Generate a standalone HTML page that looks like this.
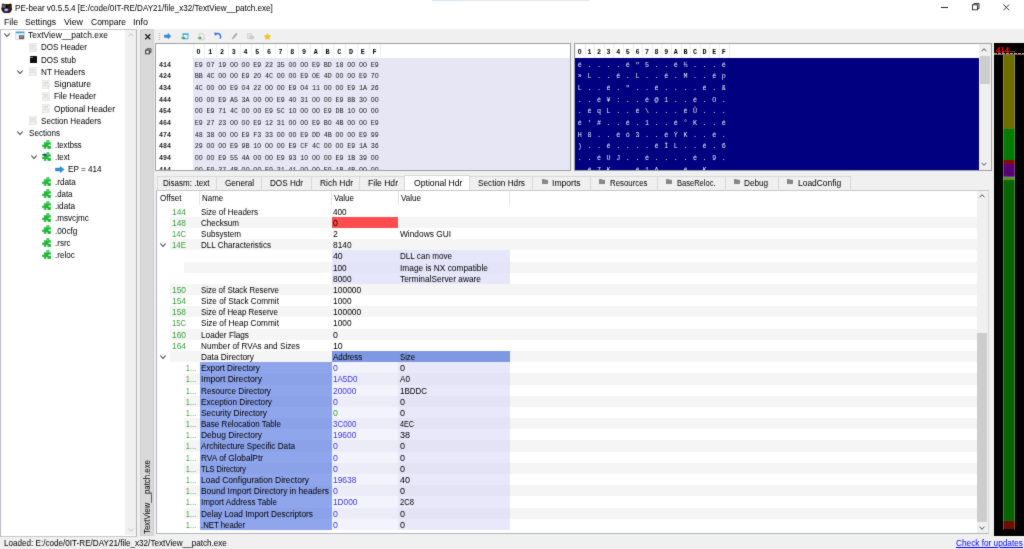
<!DOCTYPE html>
<html><head><meta charset="utf-8"><title>PE-bear</title>
<style>
html,body{margin:0;padding:0;}
body{width:1024px;height:549px;overflow:hidden;background:#f0f0f0;position:relative;font-family:"Liberation Sans",sans-serif;}
div,span.t,svg{position:absolute;}
span.t{white-space:nowrap;transform-origin:0 50%;}
.m{font-family:"Liberation Mono",monospace;}
.s{font-family:"Liberation Serif",serif;}
.b{font-weight:bold;}
.m i{font-family:"Liberation Sans",sans-serif;font-style:normal;font-size:7px;letter-spacing:0.13px;}
#w{left:-20px;top:-20px;width:1064px;height:589px;background:#f0f0f0;filter:url(#bf);}
#c{left:20px;top:20px;width:1024px;height:549px;}
</style></head><body>
<svg width="0" height="0" style="left:0;top:0"><filter id="bf" x="0" y="0" width="100%" height="100%" color-interpolation-filters="sRGB"><feConvolveMatrix order="3" kernelMatrix="0.015 0.08 0.015 0.08 0.62 0.08 0.015 0.08 0.015" divisor="1" edgeMode="duplicate" preserveAlpha="true"/></filter></svg>
<div id="w"><div id="c">
<div style="left:-20px;top:-20px;width:1064px;height:48.6px;background:#fff;"></div>
<div style="left:432px;top:0px;width:31px;height:1px;background:#cce4f7;"></div>
<div style="left:463px;top:0px;width:127px;height:1px;background:#e5e5e5;"></div>
<span class="t " style="left:15px;top:1px;font-size:9.6px;line-height:14px;color:#000;transform:scaleX(0.8419);">PE-bear v0.5.5.4 [E:/code/0IT-RE/DAY21/file_x32/TextView__patch.exe]</span>
<span class="t " style="left:4px;top:15px;font-size:9.6px;line-height:14px;color:#000;transform:scaleX(0.9051);">File</span>
<span class="t " style="left:25px;top:15px;font-size:9.6px;line-height:14px;color:#000;transform:scaleX(0.8937);">Settings</span>
<span class="t " style="left:64px;top:15px;font-size:9.6px;line-height:14px;color:#000;transform:scaleX(0.9208);">View</span>
<span class="t " style="left:91px;top:15px;font-size:9.6px;line-height:14px;color:#000;transform:scaleX(0.8865);">Compare</span>
<span class="t " style="left:133px;top:15px;font-size:9.6px;line-height:14px;color:#000;transform:scaleX(0.9369);">Info</span>
<span class="t " style="left:4px;top:536px;font-size:9.6px;line-height:14px;color:#000;transform:scaleX(0.8454);">Loaded: E:/code/0IT-RE/DAY21/file_x32/TextView__patch.exe</span>
<span class="t " style="left:956px;top:536px;font-size:9.6px;line-height:14px;color:#00f;transform:scaleX(0.8600);text-decoration:underline;">Check for updates</span>
<div style="left:0.4px;top:28.5px;width:136.6px;height:508px;background:#fff;border:1px solid #b2b6ba;border-top:1.5px solid #c4c8cc;border-bottom:1.4px solid #c4c8cc;box-sizing:border-box;"></div>
<div style="left:125px;top:30px;width:11px;height:504.5px;background:#f0f0f0;"></div>
<span class="t " style="left:28px;top:28px;font-size:9.6px;line-height:14px;color:#000;transform:scaleX(0.8836);">TextView__patch.exe</span>
<span class="t " style="left:41px;top:40px;font-size:9.6px;line-height:14px;color:#000;transform:scaleX(0.8371);">DOS Header</span>
<span class="t " style="left:41px;top:53px;font-size:9.6px;line-height:14px;color:#000;transform:scaleX(0.8411);">DOS stub</span>
<span class="t " style="left:41px;top:65px;font-size:9.6px;line-height:14px;color:#000;transform:scaleX(0.8532);">NT Headers</span>
<span class="t " style="left:54px;top:77px;font-size:9.6px;line-height:14px;color:#000;transform:scaleX(0.9004);">Signature</span>
<span class="t " style="left:54px;top:89px;font-size:9.6px;line-height:14px;color:#000;transform:scaleX(0.8465);">File Header</span>
<span class="t " style="left:54px;top:102px;font-size:9.6px;line-height:14px;color:#000;transform:scaleX(0.8726);">Optional Header</span>
<span class="t " style="left:41px;top:114px;font-size:9.6px;line-height:14px;color:#000;transform:scaleX(0.8454);">Section Headers</span>
<span class="t " style="left:29px;top:126px;font-size:9.6px;line-height:14px;color:#000;transform:scaleX(0.8420);">Sections</span>
<span class="t " style="left:54.5px;top:138px;font-size:9.6px;line-height:14px;color:#000;transform:scaleX(0.8072);">.textbss</span>
<span class="t " style="left:54.5px;top:150px;font-size:9.6px;line-height:14px;color:#000;transform:scaleX(0.8104);">.text</span>
<span class="t " style="left:68px;top:162px;font-size:9.6px;line-height:14px;color:#000;transform:scaleX(0.8462);">EP = 414</span>
<span class="t " style="left:54.5px;top:175px;font-size:9.6px;line-height:14px;color:#000;transform:scaleX(0.8474);">.rdata</span>
<span class="t " style="left:54.5px;top:187px;font-size:9.6px;line-height:14px;color:#000;transform:scaleX(0.8197);">.data</span>
<span class="t " style="left:54.5px;top:199px;font-size:9.6px;line-height:14px;color:#000;transform:scaleX(0.8517);">.idata</span>
<span class="t " style="left:54.5px;top:211px;font-size:9.6px;line-height:14px;color:#000;transform:scaleX(0.8451);">.msvcjmc</span>
<span class="t " style="left:54.5px;top:224px;font-size:9.6px;line-height:14px;color:#000;transform:scaleX(0.8566);">.00cfg</span>
<span class="t " style="left:54.5px;top:236px;font-size:9.6px;line-height:14px;color:#000;transform:scaleX(0.8360);">.rsrc</span>
<span class="t " style="left:54.5px;top:248px;font-size:9.6px;line-height:14px;color:#000;transform:scaleX(0.8435);">.reloc</span>
<div style="left:140px;top:29px;width:14px;height:506.6px;background:#d9d9d9;border:1px solid #cfcfcf;box-sizing:border-box;"></div>
<div style="left:155px;top:43px;width:416px;height:128px;background:#fff;border:1px solid #a0a0a0;box-sizing:border-box;"></div>
<div style="left:192.7px;top:58px;width:377.3px;height:112px;background:#e6e6f5;"></div>
<span class="t m b" style="left:196.5px;top:45px;font-size:6.7px;line-height:14px;color:#000;"><i>0</i></span>
<div style="left:192.7px;top:44px;width:1px;height:14px;background:#eeeeee;"></div>
<span class="t m b" style="left:208.23px;top:45px;font-size:6.7px;line-height:14px;color:#000;">1</span>
<div style="left:204.42999999999998px;top:44px;width:1px;height:14px;background:#eeeeee;"></div>
<span class="t m b" style="left:219.96px;top:45px;font-size:6.7px;line-height:14px;color:#000;">2</span>
<div style="left:216.16px;top:44px;width:1px;height:14px;background:#eeeeee;"></div>
<span class="t m b" style="left:231.69px;top:45px;font-size:6.7px;line-height:14px;color:#000;">3</span>
<div style="left:227.89px;top:44px;width:1px;height:14px;background:#eeeeee;"></div>
<span class="t m b" style="left:243.42000000000002px;top:45px;font-size:6.7px;line-height:14px;color:#000;">4</span>
<div style="left:239.62px;top:44px;width:1px;height:14px;background:#eeeeee;"></div>
<span class="t m b" style="left:255.15px;top:45px;font-size:6.7px;line-height:14px;color:#000;">5</span>
<div style="left:251.35px;top:44px;width:1px;height:14px;background:#eeeeee;"></div>
<span class="t m b" style="left:266.88px;top:45px;font-size:6.7px;line-height:14px;color:#000;">6</span>
<div style="left:263.08px;top:44px;width:1px;height:14px;background:#eeeeee;"></div>
<span class="t m b" style="left:278.61px;top:45px;font-size:6.7px;line-height:14px;color:#000;">7</span>
<div style="left:274.81px;top:44px;width:1px;height:14px;background:#eeeeee;"></div>
<span class="t m b" style="left:290.34px;top:45px;font-size:6.7px;line-height:14px;color:#000;">8</span>
<div style="left:286.53999999999996px;top:44px;width:1px;height:14px;background:#eeeeee;"></div>
<span class="t m b" style="left:302.07px;top:45px;font-size:6.7px;line-height:14px;color:#000;">9</span>
<div style="left:298.27px;top:44px;width:1px;height:14px;background:#eeeeee;"></div>
<span class="t m b" style="left:313.8px;top:45px;font-size:6.7px;line-height:14px;color:#000;">A</span>
<div style="left:310.0px;top:44px;width:1px;height:14px;background:#eeeeee;"></div>
<span class="t m b" style="left:325.53000000000003px;top:45px;font-size:6.7px;line-height:14px;color:#000;">B</span>
<div style="left:321.73px;top:44px;width:1px;height:14px;background:#eeeeee;"></div>
<span class="t m b" style="left:337.26px;top:45px;font-size:6.7px;line-height:14px;color:#000;">C</span>
<div style="left:333.46px;top:44px;width:1px;height:14px;background:#eeeeee;"></div>
<span class="t m b" style="left:348.99px;top:45px;font-size:6.7px;line-height:14px;color:#000;">D</span>
<div style="left:345.19px;top:44px;width:1px;height:14px;background:#eeeeee;"></div>
<span class="t m b" style="left:360.71999999999997px;top:45px;font-size:6.7px;line-height:14px;color:#000;">E</span>
<div style="left:356.91999999999996px;top:44px;width:1px;height:14px;background:#eeeeee;"></div>
<span class="t m b" style="left:372.45px;top:45px;font-size:6.7px;line-height:14px;color:#000;">F</span>
<div style="left:368.65px;top:44px;width:1px;height:14px;background:#eeeeee;"></div>
<div style="left:380.38px;top:44px;width:1px;height:14px;background:#eeeeee;"></div>
<div style="left:156px;top:58px;width:414px;height:112px;overflow:hidden;">
<span class="t m b" style="left:3px;top:0px;font-size:6.7px;line-height:14px;color:#1c1c1c;">414</span>
<span class="t m" style="left:38.69999999999999px;top:0px;font-size:6.7px;line-height:14px;color:#151515;">E9</span>
<span class="t m" style="left:50.42999999999998px;top:0px;font-size:6.7px;line-height:14px;color:#151515;"><i>0</i>7</span>
<span class="t m" style="left:62.16px;top:0px;font-size:6.7px;line-height:14px;color:#151515;">19</span>
<span class="t m" style="left:73.88999999999999px;top:0px;font-size:6.7px;line-height:14px;color:#151515;"><i>0</i><i>0</i></span>
<span class="t m" style="left:85.62px;top:0px;font-size:6.7px;line-height:14px;color:#151515;"><i>0</i><i>0</i></span>
<span class="t m" style="left:97.35px;top:0px;font-size:6.7px;line-height:14px;color:#151515;">E9</span>
<span class="t m" style="left:109.07999999999998px;top:0px;font-size:6.7px;line-height:14px;color:#151515;">22</span>
<span class="t m" style="left:120.81px;top:0px;font-size:6.7px;line-height:14px;color:#151515;">35</span>
<span class="t m" style="left:132.53999999999996px;top:0px;font-size:6.7px;line-height:14px;color:#151515;"><i>0</i><i>0</i></span>
<span class="t m" style="left:144.26999999999998px;top:0px;font-size:6.7px;line-height:14px;color:#151515;"><i>0</i><i>0</i></span>
<span class="t m" style="left:156.0px;top:0px;font-size:6.7px;line-height:14px;color:#151515;">E9</span>
<span class="t m" style="left:167.73000000000002px;top:0px;font-size:6.7px;line-height:14px;color:#151515;">BD</span>
<span class="t m" style="left:179.45999999999998px;top:0px;font-size:6.7px;line-height:14px;color:#151515;">18</span>
<span class="t m" style="left:191.19px;top:0px;font-size:6.7px;line-height:14px;color:#151515;"><i>0</i><i>0</i></span>
<span class="t m" style="left:202.91999999999996px;top:0px;font-size:6.7px;line-height:14px;color:#151515;"><i>0</i><i>0</i></span>
<span class="t m" style="left:214.64999999999998px;top:0px;font-size:6.7px;line-height:14px;color:#151515;">E9</span>
<span class="t m b" style="left:3px;top:11px;font-size:6.7px;line-height:14px;color:#1c1c1c;">424</span>
<span class="t m" style="left:38.69999999999999px;top:11px;font-size:6.7px;line-height:14px;color:#151515;">BB</span>
<span class="t m" style="left:50.42999999999998px;top:11px;font-size:6.7px;line-height:14px;color:#151515;">4C</span>
<span class="t m" style="left:62.16px;top:11px;font-size:6.7px;line-height:14px;color:#151515;"><i>0</i><i>0</i></span>
<span class="t m" style="left:73.88999999999999px;top:11px;font-size:6.7px;line-height:14px;color:#151515;"><i>0</i><i>0</i></span>
<span class="t m" style="left:85.62px;top:11px;font-size:6.7px;line-height:14px;color:#151515;">E9</span>
<span class="t m" style="left:97.35px;top:11px;font-size:6.7px;line-height:14px;color:#151515;">2<i>0</i></span>
<span class="t m" style="left:109.07999999999998px;top:11px;font-size:6.7px;line-height:14px;color:#151515;">4C</span>
<span class="t m" style="left:120.81px;top:11px;font-size:6.7px;line-height:14px;color:#151515;"><i>0</i><i>0</i></span>
<span class="t m" style="left:132.53999999999996px;top:11px;font-size:6.7px;line-height:14px;color:#151515;"><i>0</i><i>0</i></span>
<span class="t m" style="left:144.26999999999998px;top:11px;font-size:6.7px;line-height:14px;color:#151515;">E9</span>
<span class="t m" style="left:156.0px;top:11px;font-size:6.7px;line-height:14px;color:#151515;"><i>0</i>E</span>
<span class="t m" style="left:167.73000000000002px;top:11px;font-size:6.7px;line-height:14px;color:#151515;">4D</span>
<span class="t m" style="left:179.45999999999998px;top:11px;font-size:6.7px;line-height:14px;color:#151515;"><i>0</i><i>0</i></span>
<span class="t m" style="left:191.19px;top:11px;font-size:6.7px;line-height:14px;color:#151515;"><i>0</i><i>0</i></span>
<span class="t m" style="left:202.91999999999996px;top:11px;font-size:6.7px;line-height:14px;color:#151515;">E9</span>
<span class="t m" style="left:214.64999999999998px;top:11px;font-size:6.7px;line-height:14px;color:#151515;">7<i>0</i></span>
<span class="t m b" style="left:3px;top:23px;font-size:6.7px;line-height:14px;color:#1c1c1c;">434</span>
<span class="t m" style="left:38.69999999999999px;top:23px;font-size:6.7px;line-height:14px;color:#151515;">4C</span>
<span class="t m" style="left:50.42999999999998px;top:23px;font-size:6.7px;line-height:14px;color:#151515;"><i>0</i><i>0</i></span>
<span class="t m" style="left:62.16px;top:23px;font-size:6.7px;line-height:14px;color:#151515;"><i>0</i><i>0</i></span>
<span class="t m" style="left:73.88999999999999px;top:23px;font-size:6.7px;line-height:14px;color:#151515;">E9</span>
<span class="t m" style="left:85.62px;top:23px;font-size:6.7px;line-height:14px;color:#151515;"><i>0</i>4</span>
<span class="t m" style="left:97.35px;top:23px;font-size:6.7px;line-height:14px;color:#151515;">22</span>
<span class="t m" style="left:109.07999999999998px;top:23px;font-size:6.7px;line-height:14px;color:#151515;"><i>0</i><i>0</i></span>
<span class="t m" style="left:120.81px;top:23px;font-size:6.7px;line-height:14px;color:#151515;"><i>0</i><i>0</i></span>
<span class="t m" style="left:132.53999999999996px;top:23px;font-size:6.7px;line-height:14px;color:#151515;">E9</span>
<span class="t m" style="left:144.26999999999998px;top:23px;font-size:6.7px;line-height:14px;color:#151515;"><i>0</i>4</span>
<span class="t m" style="left:156.0px;top:23px;font-size:6.7px;line-height:14px;color:#151515;">11</span>
<span class="t m" style="left:167.73000000000002px;top:23px;font-size:6.7px;line-height:14px;color:#151515;"><i>0</i><i>0</i></span>
<span class="t m" style="left:179.45999999999998px;top:23px;font-size:6.7px;line-height:14px;color:#151515;"><i>0</i><i>0</i></span>
<span class="t m" style="left:191.19px;top:23px;font-size:6.7px;line-height:14px;color:#151515;">E9</span>
<span class="t m" style="left:202.91999999999996px;top:23px;font-size:6.7px;line-height:14px;color:#151515;">1A</span>
<span class="t m" style="left:214.64999999999998px;top:23px;font-size:6.7px;line-height:14px;color:#151515;">26</span>
<span class="t m b" style="left:3px;top:35px;font-size:6.7px;line-height:14px;color:#1c1c1c;">444</span>
<span class="t m" style="left:38.69999999999999px;top:35px;font-size:6.7px;line-height:14px;color:#151515;"><i>0</i><i>0</i></span>
<span class="t m" style="left:50.42999999999998px;top:35px;font-size:6.7px;line-height:14px;color:#151515;"><i>0</i><i>0</i></span>
<span class="t m" style="left:62.16px;top:35px;font-size:6.7px;line-height:14px;color:#151515;">E9</span>
<span class="t m" style="left:73.88999999999999px;top:35px;font-size:6.7px;line-height:14px;color:#151515;">A5</span>
<span class="t m" style="left:85.62px;top:35px;font-size:6.7px;line-height:14px;color:#151515;">3A</span>
<span class="t m" style="left:97.35px;top:35px;font-size:6.7px;line-height:14px;color:#151515;"><i>0</i><i>0</i></span>
<span class="t m" style="left:109.07999999999998px;top:35px;font-size:6.7px;line-height:14px;color:#151515;"><i>0</i><i>0</i></span>
<span class="t m" style="left:120.81px;top:35px;font-size:6.7px;line-height:14px;color:#151515;">E9</span>
<span class="t m" style="left:132.53999999999996px;top:35px;font-size:6.7px;line-height:14px;color:#151515;">4<i>0</i></span>
<span class="t m" style="left:144.26999999999998px;top:35px;font-size:6.7px;line-height:14px;color:#151515;">31</span>
<span class="t m" style="left:156.0px;top:35px;font-size:6.7px;line-height:14px;color:#151515;"><i>0</i><i>0</i></span>
<span class="t m" style="left:167.73000000000002px;top:35px;font-size:6.7px;line-height:14px;color:#151515;"><i>0</i><i>0</i></span>
<span class="t m" style="left:179.45999999999998px;top:35px;font-size:6.7px;line-height:14px;color:#151515;">E9</span>
<span class="t m" style="left:191.19px;top:35px;font-size:6.7px;line-height:14px;color:#151515;">8B</span>
<span class="t m" style="left:202.91999999999996px;top:35px;font-size:6.7px;line-height:14px;color:#151515;">3<i>0</i></span>
<span class="t m" style="left:214.64999999999998px;top:35px;font-size:6.7px;line-height:14px;color:#151515;"><i>0</i><i>0</i></span>
<span class="t m b" style="left:3px;top:46px;font-size:6.7px;line-height:14px;color:#1c1c1c;">454</span>
<span class="t m" style="left:38.69999999999999px;top:46px;font-size:6.7px;line-height:14px;color:#151515;"><i>0</i><i>0</i></span>
<span class="t m" style="left:50.42999999999998px;top:46px;font-size:6.7px;line-height:14px;color:#151515;">E9</span>
<span class="t m" style="left:62.16px;top:46px;font-size:6.7px;line-height:14px;color:#151515;">71</span>
<span class="t m" style="left:73.88999999999999px;top:46px;font-size:6.7px;line-height:14px;color:#151515;">4C</span>
<span class="t m" style="left:85.62px;top:46px;font-size:6.7px;line-height:14px;color:#151515;"><i>0</i><i>0</i></span>
<span class="t m" style="left:97.35px;top:46px;font-size:6.7px;line-height:14px;color:#151515;"><i>0</i><i>0</i></span>
<span class="t m" style="left:109.07999999999998px;top:46px;font-size:6.7px;line-height:14px;color:#151515;">E9</span>
<span class="t m" style="left:120.81px;top:46px;font-size:6.7px;line-height:14px;color:#151515;">5C</span>
<span class="t m" style="left:132.53999999999996px;top:46px;font-size:6.7px;line-height:14px;color:#151515;">1<i>0</i></span>
<span class="t m" style="left:144.26999999999998px;top:46px;font-size:6.7px;line-height:14px;color:#151515;"><i>0</i><i>0</i></span>
<span class="t m" style="left:156.0px;top:46px;font-size:6.7px;line-height:14px;color:#151515;"><i>0</i><i>0</i></span>
<span class="t m" style="left:167.73000000000002px;top:46px;font-size:6.7px;line-height:14px;color:#151515;">E9</span>
<span class="t m" style="left:179.45999999999998px;top:46px;font-size:6.7px;line-height:14px;color:#151515;">DB</span>
<span class="t m" style="left:191.19px;top:46px;font-size:6.7px;line-height:14px;color:#151515;">1<i>0</i></span>
<span class="t m" style="left:202.91999999999996px;top:46px;font-size:6.7px;line-height:14px;color:#151515;"><i>0</i><i>0</i></span>
<span class="t m" style="left:214.64999999999998px;top:46px;font-size:6.7px;line-height:14px;color:#151515;"><i>0</i><i>0</i></span>
<span class="t m b" style="left:3px;top:58px;font-size:6.7px;line-height:14px;color:#1c1c1c;">464</span>
<span class="t m" style="left:38.69999999999999px;top:58px;font-size:6.7px;line-height:14px;color:#151515;">E9</span>
<span class="t m" style="left:50.42999999999998px;top:58px;font-size:6.7px;line-height:14px;color:#151515;">27</span>
<span class="t m" style="left:62.16px;top:58px;font-size:6.7px;line-height:14px;color:#151515;">23</span>
<span class="t m" style="left:73.88999999999999px;top:58px;font-size:6.7px;line-height:14px;color:#151515;"><i>0</i><i>0</i></span>
<span class="t m" style="left:85.62px;top:58px;font-size:6.7px;line-height:14px;color:#151515;"><i>0</i><i>0</i></span>
<span class="t m" style="left:97.35px;top:58px;font-size:6.7px;line-height:14px;color:#151515;">E9</span>
<span class="t m" style="left:109.07999999999998px;top:58px;font-size:6.7px;line-height:14px;color:#151515;">12</span>
<span class="t m" style="left:120.81px;top:58px;font-size:6.7px;line-height:14px;color:#151515;">31</span>
<span class="t m" style="left:132.53999999999996px;top:58px;font-size:6.7px;line-height:14px;color:#151515;"><i>0</i><i>0</i></span>
<span class="t m" style="left:144.26999999999998px;top:58px;font-size:6.7px;line-height:14px;color:#151515;"><i>0</i><i>0</i></span>
<span class="t m" style="left:156.0px;top:58px;font-size:6.7px;line-height:14px;color:#151515;">E9</span>
<span class="t m" style="left:167.73000000000002px;top:58px;font-size:6.7px;line-height:14px;color:#151515;">B<i>0</i></span>
<span class="t m" style="left:179.45999999999998px;top:58px;font-size:6.7px;line-height:14px;color:#151515;">4B</span>
<span class="t m" style="left:191.19px;top:58px;font-size:6.7px;line-height:14px;color:#151515;"><i>0</i><i>0</i></span>
<span class="t m" style="left:202.91999999999996px;top:58px;font-size:6.7px;line-height:14px;color:#151515;"><i>0</i><i>0</i></span>
<span class="t m" style="left:214.64999999999998px;top:58px;font-size:6.7px;line-height:14px;color:#151515;">E9</span>
<span class="t m b" style="left:3px;top:70px;font-size:6.7px;line-height:14px;color:#1c1c1c;">474</span>
<span class="t m" style="left:38.69999999999999px;top:70px;font-size:6.7px;line-height:14px;color:#151515;">48</span>
<span class="t m" style="left:50.42999999999998px;top:70px;font-size:6.7px;line-height:14px;color:#151515;">38</span>
<span class="t m" style="left:62.16px;top:70px;font-size:6.7px;line-height:14px;color:#151515;"><i>0</i><i>0</i></span>
<span class="t m" style="left:73.88999999999999px;top:70px;font-size:6.7px;line-height:14px;color:#151515;"><i>0</i><i>0</i></span>
<span class="t m" style="left:85.62px;top:70px;font-size:6.7px;line-height:14px;color:#151515;">E9</span>
<span class="t m" style="left:97.35px;top:70px;font-size:6.7px;line-height:14px;color:#151515;">F3</span>
<span class="t m" style="left:109.07999999999998px;top:70px;font-size:6.7px;line-height:14px;color:#151515;">33</span>
<span class="t m" style="left:120.81px;top:70px;font-size:6.7px;line-height:14px;color:#151515;"><i>0</i><i>0</i></span>
<span class="t m" style="left:132.53999999999996px;top:70px;font-size:6.7px;line-height:14px;color:#151515;"><i>0</i><i>0</i></span>
<span class="t m" style="left:144.26999999999998px;top:70px;font-size:6.7px;line-height:14px;color:#151515;">E9</span>
<span class="t m" style="left:156.0px;top:70px;font-size:6.7px;line-height:14px;color:#151515;">DD</span>
<span class="t m" style="left:167.73000000000002px;top:70px;font-size:6.7px;line-height:14px;color:#151515;">4B</span>
<span class="t m" style="left:179.45999999999998px;top:70px;font-size:6.7px;line-height:14px;color:#151515;"><i>0</i><i>0</i></span>
<span class="t m" style="left:191.19px;top:70px;font-size:6.7px;line-height:14px;color:#151515;"><i>0</i><i>0</i></span>
<span class="t m" style="left:202.91999999999996px;top:70px;font-size:6.7px;line-height:14px;color:#151515;">E9</span>
<span class="t m" style="left:214.64999999999998px;top:70px;font-size:6.7px;line-height:14px;color:#151515;">99</span>
<span class="t m b" style="left:3px;top:81px;font-size:6.7px;line-height:14px;color:#1c1c1c;">484</span>
<span class="t m" style="left:38.69999999999999px;top:81px;font-size:6.7px;line-height:14px;color:#151515;">29</span>
<span class="t m" style="left:50.42999999999998px;top:81px;font-size:6.7px;line-height:14px;color:#151515;"><i>0</i><i>0</i></span>
<span class="t m" style="left:62.16px;top:81px;font-size:6.7px;line-height:14px;color:#151515;"><i>0</i><i>0</i></span>
<span class="t m" style="left:73.88999999999999px;top:81px;font-size:6.7px;line-height:14px;color:#151515;">E9</span>
<span class="t m" style="left:85.62px;top:81px;font-size:6.7px;line-height:14px;color:#151515;">9B</span>
<span class="t m" style="left:97.35px;top:81px;font-size:6.7px;line-height:14px;color:#151515;">1<i>0</i></span>
<span class="t m" style="left:109.07999999999998px;top:81px;font-size:6.7px;line-height:14px;color:#151515;"><i>0</i><i>0</i></span>
<span class="t m" style="left:120.81px;top:81px;font-size:6.7px;line-height:14px;color:#151515;"><i>0</i><i>0</i></span>
<span class="t m" style="left:132.53999999999996px;top:81px;font-size:6.7px;line-height:14px;color:#151515;">E9</span>
<span class="t m" style="left:144.26999999999998px;top:81px;font-size:6.7px;line-height:14px;color:#151515;">CF</span>
<span class="t m" style="left:156.0px;top:81px;font-size:6.7px;line-height:14px;color:#151515;">4C</span>
<span class="t m" style="left:167.73000000000002px;top:81px;font-size:6.7px;line-height:14px;color:#151515;"><i>0</i><i>0</i></span>
<span class="t m" style="left:179.45999999999998px;top:81px;font-size:6.7px;line-height:14px;color:#151515;"><i>0</i><i>0</i></span>
<span class="t m" style="left:191.19px;top:81px;font-size:6.7px;line-height:14px;color:#151515;">E9</span>
<span class="t m" style="left:202.91999999999996px;top:81px;font-size:6.7px;line-height:14px;color:#151515;">1A</span>
<span class="t m" style="left:214.64999999999998px;top:81px;font-size:6.7px;line-height:14px;color:#151515;">36</span>
<span class="t m b" style="left:3px;top:93px;font-size:6.7px;line-height:14px;color:#1c1c1c;">494</span>
<span class="t m" style="left:38.69999999999999px;top:93px;font-size:6.7px;line-height:14px;color:#151515;"><i>0</i><i>0</i></span>
<span class="t m" style="left:50.42999999999998px;top:93px;font-size:6.7px;line-height:14px;color:#151515;"><i>0</i><i>0</i></span>
<span class="t m" style="left:62.16px;top:93px;font-size:6.7px;line-height:14px;color:#151515;">E9</span>
<span class="t m" style="left:73.88999999999999px;top:93px;font-size:6.7px;line-height:14px;color:#151515;">55</span>
<span class="t m" style="left:85.62px;top:93px;font-size:6.7px;line-height:14px;color:#151515;">4A</span>
<span class="t m" style="left:97.35px;top:93px;font-size:6.7px;line-height:14px;color:#151515;"><i>0</i><i>0</i></span>
<span class="t m" style="left:109.07999999999998px;top:93px;font-size:6.7px;line-height:14px;color:#151515;"><i>0</i><i>0</i></span>
<span class="t m" style="left:120.81px;top:93px;font-size:6.7px;line-height:14px;color:#151515;">E9</span>
<span class="t m" style="left:132.53999999999996px;top:93px;font-size:6.7px;line-height:14px;color:#151515;">93</span>
<span class="t m" style="left:144.26999999999998px;top:93px;font-size:6.7px;line-height:14px;color:#151515;">1<i>0</i></span>
<span class="t m" style="left:156.0px;top:93px;font-size:6.7px;line-height:14px;color:#151515;"><i>0</i><i>0</i></span>
<span class="t m" style="left:167.73000000000002px;top:93px;font-size:6.7px;line-height:14px;color:#151515;"><i>0</i><i>0</i></span>
<span class="t m" style="left:179.45999999999998px;top:93px;font-size:6.7px;line-height:14px;color:#151515;">E9</span>
<span class="t m" style="left:191.19px;top:93px;font-size:6.7px;line-height:14px;color:#151515;">1B</span>
<span class="t m" style="left:202.91999999999996px;top:93px;font-size:6.7px;line-height:14px;color:#151515;">39</span>
<span class="t m" style="left:214.64999999999998px;top:93px;font-size:6.7px;line-height:14px;color:#151515;"><i>0</i><i>0</i></span>
<span class="t m b" style="left:3px;top:105px;font-size:6.7px;line-height:14px;color:#1c1c1c;">4A4</span>
<span class="t m" style="left:38.69999999999999px;top:105px;font-size:6.7px;line-height:14px;color:#151515;"><i>0</i><i>0</i></span>
<span class="t m" style="left:50.42999999999998px;top:105px;font-size:6.7px;line-height:14px;color:#151515;">E9</span>
<span class="t m" style="left:62.16px;top:105px;font-size:6.7px;line-height:14px;color:#151515;">37</span>
<span class="t m" style="left:73.88999999999999px;top:105px;font-size:6.7px;line-height:14px;color:#151515;">4B</span>
<span class="t m" style="left:85.62px;top:105px;font-size:6.7px;line-height:14px;color:#151515;"><i>0</i><i>0</i></span>
<span class="t m" style="left:97.35px;top:105px;font-size:6.7px;line-height:14px;color:#151515;"><i>0</i><i>0</i></span>
<span class="t m" style="left:109.07999999999998px;top:105px;font-size:6.7px;line-height:14px;color:#151515;">E9</span>
<span class="t m" style="left:120.81px;top:105px;font-size:6.7px;line-height:14px;color:#151515;">31</span>
<span class="t m" style="left:132.53999999999996px;top:105px;font-size:6.7px;line-height:14px;color:#151515;">41</span>
<span class="t m" style="left:144.26999999999998px;top:105px;font-size:6.7px;line-height:14px;color:#151515;"><i>0</i><i>0</i></span>
<span class="t m" style="left:156.0px;top:105px;font-size:6.7px;line-height:14px;color:#151515;"><i>0</i><i>0</i></span>
<span class="t m" style="left:167.73000000000002px;top:105px;font-size:6.7px;line-height:14px;color:#151515;">E9</span>
<span class="t m" style="left:179.45999999999998px;top:105px;font-size:6.7px;line-height:14px;color:#151515;">1B</span>
<span class="t m" style="left:191.19px;top:105px;font-size:6.7px;line-height:14px;color:#151515;">4B</span>
<span class="t m" style="left:202.91999999999996px;top:105px;font-size:6.7px;line-height:14px;color:#151515;"><i>0</i><i>0</i></span>
<span class="t m" style="left:214.64999999999998px;top:105px;font-size:6.7px;line-height:14px;color:#151515;"><i>0</i><i>0</i></span>
</div>
<div style="left:574px;top:43px;width:418px;height:128px;background:#fff;border:1px solid #a0a0a0;box-sizing:border-box;"></div>
<div style="left:575px;top:58px;width:404px;height:112px;background:#000080;"></div>
<div style="left:979px;top:44px;width:12px;height:126px;background:#f0f0f0;"></div>
<div style="left:979.5px;top:56px;width:10px;height:27.7px;background:#cdcdcd;"></div>
<div style="left:994px;top:43.3px;width:50px;height:492.5px;background:#000;"></div>
<div style="left:1003.3px;top:53.7px;width:11.4px;height:75.5px;background:#6e6e00;"></div>
<div style="left:1003.3px;top:129.2px;width:11.4px;height:31.1px;background:#007c00;"></div>
<div style="left:1003.3px;top:160.3px;width:11.4px;height:3.4px;background:#8a0a00;"></div>
<div style="left:1003.3px;top:163.7px;width:11.4px;height:12.5px;background:#5a0078;"></div>
<div style="left:1003.3px;top:176.2px;width:11.4px;height:1px;background:#3048d8;"></div>
<div style="left:1003.3px;top:177.3px;width:11.4px;height:2px;background:#8c8600;"></div>
<div style="left:1003.3px;top:179.3px;width:11.4px;height:0.8px;background:#30a030;"></div>
<div style="left:1003.3px;top:180px;width:11.4px;height:341.3px;background:#086600;"></div>
<div style="left:1003.3px;top:521.3px;width:11.4px;height:8.2px;background:#6e0c00;"></div>
<div style="left:1003.3px;top:50.5px;width:0.6px;height:479px;background:rgba(200,200,160,0.35);"></div>
<div style="left:1014.0999999999999px;top:50.5px;width:0.6px;height:479px;background:rgba(200,200,160,0.35);"></div>
<div style="left:1003.3px;top:50.5px;width:11.4px;height:0.6px;background:rgba(200,200,160,0.35);"></div>
<div style="left:155.5px;top:189.6px;width:833.5px;height:344.2px;background:#fff;border:1px solid #b2b6ba;border-top:1.4px solid #c6cace;border-right:1px solid #d6d8da;box-sizing:border-box;"></div>
<div style="left:199px;top:191px;width:1px;height:14px;background:#e5e5e5;"></div>
<div style="left:331px;top:191px;width:1px;height:14px;background:#e5e5e5;"></div>
<div style="left:398px;top:191px;width:1px;height:14px;background:#e5e5e5;"></div>
<div style="left:509px;top:191px;width:1px;height:14px;background:#e5e5e5;"></div>
<span class="t " style="left:159.7px;top:191px;font-size:9.6px;line-height:14px;color:#000;transform:scaleX(0.8493);">Offset</span>
<span class="t " style="left:202.3px;top:191px;font-size:9.6px;line-height:14px;color:#000;transform:scaleX(0.8279);">Name</span>
<span class="t " style="left:334px;top:191px;font-size:9.6px;line-height:14px;color:#000;transform:scaleX(0.8389);">Value</span>
<span class="t " style="left:401px;top:191px;font-size:9.6px;line-height:14px;color:#000;transform:scaleX(0.8389);">Value</span>
<span class="t " style="left:172px;top:205px;font-size:9.6px;line-height:14px;color:#38a038;transform:scaleX(0.8742);">144</span>
<span class="t " style="left:201px;top:205px;font-size:9.6px;line-height:14px;color:#000;transform:scaleX(0.8346);">Size of Headers</span>
<span class="t " style="left:333.3px;top:205px;font-size:9.6px;line-height:14px;color:#000;transform:scaleX(0.8523);">400</span>
<div style="left:170px;top:216.88px;width:806.5px;height:11.18px;background:#f5f5f5;"></div>
<div style="left:331.5px;top:216.88px;width:66.5px;height:11.18px;background:#ff4d4d;"></div>
<span class="t " style="left:172px;top:216px;font-size:9.6px;line-height:14px;color:#38a038;transform:scaleX(0.8742);">148</span>
<span class="t " style="left:201px;top:216px;font-size:9.6px;line-height:14px;color:#000;transform:scaleX(0.8380);">Checksum</span>
<span class="t " style="left:333.3px;top:216px;font-size:9.6px;line-height:14px;color:#000;transform:scaleX(0.9132);">0</span>
<span class="t " style="left:172px;top:227px;font-size:9.6px;line-height:14px;color:#38a038;transform:scaleX(0.7950);">14C</span>
<span class="t " style="left:201px;top:227px;font-size:9.6px;line-height:14px;color:#000;transform:scaleX(0.8424);">Subsystem</span>
<span class="t " style="left:333.3px;top:227px;font-size:9.6px;line-height:14px;color:#000;transform:scaleX(0.9132);">2</span>
<span class="t " style="left:400px;top:227px;font-size:9.6px;line-height:14px;color:#000;transform:scaleX(0.8692);">Windows GUI</span>
<div style="left:170px;top:239.24px;width:806.5px;height:11.18px;background:#f5f5f5;"></div>
<span class="t " style="left:172px;top:238px;font-size:9.6px;line-height:14px;color:#38a038;transform:scaleX(0.8196);">14E</span>
<span class="t " style="left:201px;top:238px;font-size:9.6px;line-height:14px;color:#000;transform:scaleX(0.8393);">DLL Characteristics</span>
<span class="t " style="left:333.3px;top:238px;font-size:9.6px;line-height:14px;color:#000;transform:scaleX(0.8675);">8140</span>
<div style="left:331.5px;top:250.42px;width:178px;height:11.18px;background:#e6e6fa;"></div>
<span class="t " style="left:333.3px;top:249px;font-size:9.6px;line-height:14px;color:#000;transform:scaleX(0.9132);">40</span>
<span class="t " style="left:400px;top:249px;font-size:9.6px;line-height:14px;color:#000;transform:scaleX(0.8450);">DLL can move</span>
<div style="left:183.5px;top:261.6px;width:793.0px;height:11.18px;background:#f5f5f5;"></div>
<div style="left:331.5px;top:261.6px;width:178px;height:11.18px;background:#e4e4f8;"></div>
<span class="t " style="left:333.3px;top:261px;font-size:9.6px;line-height:14px;color:#000;transform:scaleX(0.8523);">100</span>
<span class="t " style="left:400px;top:261px;font-size:9.6px;line-height:14px;color:#000;transform:scaleX(0.8681);">Image is NX compatible</span>
<div style="left:331.5px;top:272.78px;width:178px;height:11.18px;background:#e6e6fa;"></div>
<span class="t " style="left:333.3px;top:272px;font-size:9.6px;line-height:14px;color:#000;transform:scaleX(0.8675);">8000</span>
<span class="t " style="left:400px;top:272px;font-size:9.6px;line-height:14px;color:#000;transform:scaleX(0.8676);">TerminalServer aware</span>
<div style="left:170px;top:283.96px;width:806.5px;height:11.18px;background:#f5f5f5;"></div>
<span class="t " style="left:172px;top:283px;font-size:9.6px;line-height:14px;color:#38a038;transform:scaleX(0.8742);">150</span>
<span class="t " style="left:201px;top:283px;font-size:9.6px;line-height:14px;color:#000;transform:scaleX(0.8260);">Size of Stack Reserve</span>
<span class="t " style="left:333.3px;top:283px;font-size:9.6px;line-height:14px;color:#000;transform:scaleX(0.8827);">100000</span>
<span class="t " style="left:172px;top:294px;font-size:9.6px;line-height:14px;color:#38a038;transform:scaleX(0.8742);">154</span>
<span class="t " style="left:201px;top:294px;font-size:9.6px;line-height:14px;color:#000;transform:scaleX(0.8501);">Size of Stack Commit</span>
<span class="t " style="left:333.3px;top:294px;font-size:9.6px;line-height:14px;color:#000;transform:scaleX(0.8675);">1000</span>
<div style="left:170px;top:306.32px;width:806.5px;height:11.18px;background:#f5f5f5;"></div>
<span class="t " style="left:172px;top:305px;font-size:9.6px;line-height:14px;color:#38a038;transform:scaleX(0.8742);">158</span>
<span class="t " style="left:201px;top:305px;font-size:9.6px;line-height:14px;color:#000;transform:scaleX(0.8246);">Size of Heap Reserve</span>
<span class="t " style="left:333.3px;top:305px;font-size:9.6px;line-height:14px;color:#000;transform:scaleX(0.8827);">100000</span>
<span class="t " style="left:172px;top:316px;font-size:9.6px;line-height:14px;color:#38a038;transform:scaleX(0.7950);">15C</span>
<span class="t " style="left:201px;top:316px;font-size:9.6px;line-height:14px;color:#000;transform:scaleX(0.8600);">Size of Heap Commit</span>
<span class="t " style="left:333.3px;top:316px;font-size:9.6px;line-height:14px;color:#000;transform:scaleX(0.8675);">1000</span>
<div style="left:170px;top:328.68px;width:806.5px;height:11.18px;background:#f5f5f5;"></div>
<span class="t " style="left:172px;top:328px;font-size:9.6px;line-height:14px;color:#38a038;transform:scaleX(0.8742);">160</span>
<span class="t " style="left:201px;top:328px;font-size:9.6px;line-height:14px;color:#000;transform:scaleX(0.8567);">Loader Flags</span>
<span class="t " style="left:333.3px;top:328px;font-size:9.6px;line-height:14px;color:#000;transform:scaleX(0.9132);">0</span>
<span class="t " style="left:172px;top:339px;font-size:9.6px;line-height:14px;color:#38a038;transform:scaleX(0.8742);">164</span>
<span class="t " style="left:201px;top:339px;font-size:9.6px;line-height:14px;color:#000;transform:scaleX(0.8538);">Number of RVAs and Sizes</span>
<span class="t " style="left:333.3px;top:339px;font-size:9.6px;line-height:14px;color:#000;transform:scaleX(0.9132);">10</span>
<div style="left:170px;top:351.04px;width:806.5px;height:11.18px;background:#f5f5f5;"></div>
<div style="left:331.5px;top:351.04px;width:178px;height:11.18px;background:#7f98e4;"></div>
<span class="t " style="left:201px;top:350px;font-size:9.6px;line-height:14px;color:#000;transform:scaleX(0.8639);">Data Directory</span>
<span class="t " style="left:333.3px;top:350px;font-size:9.6px;line-height:14px;color:#000;transform:scaleX(0.8306);">Address</span>
<span class="t " style="left:400px;top:350px;font-size:9.6px;line-height:14px;color:#000;transform:scaleX(0.8032);">Size</span>
<div style="left:199.5px;top:362.22px;width:132px;height:11.18px;background:#8fa5ec;"></div>
<div style="left:331.5px;top:362.22px;width:66.5px;height:11.18px;background:#f3f3fd;"></div>
<div style="left:398px;top:362.22px;width:111.5px;height:11.18px;background:#e8e8fa;"></div>
<span class="t " style="left:185.5px;top:361px;font-size:9.6px;line-height:14px;color:#38a038;transform:scaleX(0.6962);">1…</span>
<span class="t " style="left:201px;top:361px;font-size:9.6px;line-height:14px;color:#000;transform:scaleX(0.8574);">Export Directory</span>
<span class="t " style="left:333.3px;top:361px;font-size:9.6px;line-height:14px;color:#3838e0;transform:scaleX(0.9132);">0</span>
<span class="t " style="left:400px;top:361px;font-size:9.6px;line-height:14px;color:#000;transform:scaleX(0.9366);">0</span>
<div style="left:183.5px;top:373.4px;width:793.0px;height:11.18px;background:#f5f5f5;"></div>
<div style="left:199.5px;top:373.4px;width:132px;height:11.18px;background:#8ba1e8;"></div>
<div style="left:331.5px;top:373.4px;width:66.5px;height:11.18px;background:#ececf8;"></div>
<div style="left:398px;top:373.4px;width:111.5px;height:11.18px;background:#e3e3f5;"></div>
<span class="t " style="left:185.5px;top:372px;font-size:9.6px;line-height:14px;color:#38a038;transform:scaleX(0.6962);">1…</span>
<span class="t " style="left:201px;top:372px;font-size:9.6px;line-height:14px;color:#000;transform:scaleX(0.8935);">Import Directory</span>
<span class="t " style="left:333.3px;top:372px;font-size:9.6px;line-height:14px;color:#3838e0;transform:scaleX(0.8304);">1A5D0</span>
<span class="t " style="left:400px;top:372px;font-size:9.6px;line-height:14px;color:#000;transform:scaleX(0.8516);">A0</span>
<div style="left:199.5px;top:384.58px;width:132px;height:11.18px;background:#8fa5ec;"></div>
<div style="left:331.5px;top:384.58px;width:66.5px;height:11.18px;background:#f3f3fd;"></div>
<div style="left:398px;top:384.58px;width:111.5px;height:11.18px;background:#e8e8fa;"></div>
<span class="t " style="left:185.5px;top:384px;font-size:9.6px;line-height:14px;color:#38a038;transform:scaleX(0.6962);">1…</span>
<span class="t " style="left:201px;top:384px;font-size:9.6px;line-height:14px;color:#000;transform:scaleX(0.8521);">Resource Directory</span>
<span class="t " style="left:333.3px;top:384px;font-size:9.6px;line-height:14px;color:#3838e0;transform:scaleX(0.8767);">20000</span>
<span class="t " style="left:400px;top:384px;font-size:9.6px;line-height:14px;color:#000;transform:scaleX(0.8297);">1BDDC</span>
<div style="left:183.5px;top:395.76px;width:793.0px;height:11.18px;background:#f5f5f5;"></div>
<div style="left:199.5px;top:395.76px;width:132px;height:11.18px;background:#8ba1e8;"></div>
<div style="left:331.5px;top:395.76px;width:66.5px;height:11.18px;background:#ececf8;"></div>
<div style="left:398px;top:395.76px;width:111.5px;height:11.18px;background:#e3e3f5;"></div>
<span class="t " style="left:185.5px;top:395px;font-size:9.6px;line-height:14px;color:#38a038;transform:scaleX(0.6962);">1…</span>
<span class="t " style="left:201px;top:395px;font-size:9.6px;line-height:14px;color:#000;transform:scaleX(0.8531);">Exception Directory</span>
<span class="t " style="left:333.3px;top:395px;font-size:9.6px;line-height:14px;color:#3838e0;transform:scaleX(0.9132);">0</span>
<span class="t " style="left:400px;top:395px;font-size:9.6px;line-height:14px;color:#000;transform:scaleX(0.9366);">0</span>
<div style="left:199.5px;top:406.94px;width:132px;height:11.18px;background:#8fa5ec;"></div>
<div style="left:331.5px;top:406.94px;width:66.5px;height:11.18px;background:#f3f3fd;"></div>
<div style="left:398px;top:406.94px;width:111.5px;height:11.18px;background:#e8e8fa;"></div>
<span class="t " style="left:185.5px;top:406px;font-size:9.6px;line-height:14px;color:#38a038;transform:scaleX(0.6962);">1…</span>
<span class="t " style="left:201px;top:406px;font-size:9.6px;line-height:14px;color:#000;transform:scaleX(0.8713);">Security Directory</span>
<span class="t " style="left:333.3px;top:406px;font-size:9.6px;line-height:14px;color:#38a038;transform:scaleX(0.9132);">0</span>
<span class="t " style="left:400px;top:406px;font-size:9.6px;line-height:14px;color:#000;transform:scaleX(0.9366);">0</span>
<div style="left:183.5px;top:418.12px;width:793.0px;height:11.18px;background:#f5f5f5;"></div>
<div style="left:199.5px;top:418.12px;width:132px;height:11.18px;background:#8ba1e8;"></div>
<div style="left:331.5px;top:418.12px;width:66.5px;height:11.18px;background:#ececf8;"></div>
<div style="left:398px;top:418.12px;width:111.5px;height:11.18px;background:#e3e3f5;"></div>
<span class="t " style="left:185.5px;top:417px;font-size:9.6px;line-height:14px;color:#38a038;transform:scaleX(0.6962);">1…</span>
<span class="t " style="left:201px;top:417px;font-size:9.6px;line-height:14px;color:#000;transform:scaleX(0.8390);">Base Relocation Table</span>
<span class="t " style="left:333.3px;top:417px;font-size:9.6px;line-height:14px;color:#3838e0;transform:scaleX(0.8272);">3C000</span>
<span class="t " style="left:400px;top:417px;font-size:9.6px;line-height:14px;color:#000;transform:scaleX(0.7497);">4EC</span>
<div style="left:199.5px;top:429.3px;width:132px;height:11.18px;background:#8fa5ec;"></div>
<div style="left:331.5px;top:429.3px;width:66.5px;height:11.18px;background:#f3f3fd;"></div>
<div style="left:398px;top:429.3px;width:111.5px;height:11.18px;background:#e8e8fa;"></div>
<span class="t " style="left:185.5px;top:428px;font-size:9.6px;line-height:14px;color:#38a038;transform:scaleX(0.6962);">1…</span>
<span class="t " style="left:201px;top:428px;font-size:9.6px;line-height:14px;color:#000;transform:scaleX(0.8795);">Debug Directory</span>
<span class="t " style="left:333.3px;top:428px;font-size:9.6px;line-height:14px;color:#3838e0;transform:scaleX(0.8767);">19600</span>
<span class="t " style="left:400px;top:428px;font-size:9.6px;line-height:14px;color:#000;transform:scaleX(0.9366);">38</span>
<div style="left:183.5px;top:440.48px;width:793.0px;height:11.18px;background:#f5f5f5;"></div>
<div style="left:199.5px;top:440.48px;width:132px;height:11.18px;background:#8ba1e8;"></div>
<div style="left:331.5px;top:440.48px;width:66.5px;height:11.18px;background:#ececf8;"></div>
<div style="left:398px;top:440.48px;width:111.5px;height:11.18px;background:#e3e3f5;"></div>
<span class="t " style="left:185.5px;top:439px;font-size:9.6px;line-height:14px;color:#38a038;transform:scaleX(0.6962);">1…</span>
<span class="t " style="left:201px;top:439px;font-size:9.6px;line-height:14px;color:#000;transform:scaleX(0.8511);">Architecture Specific Data</span>
<span class="t " style="left:333.3px;top:439px;font-size:9.6px;line-height:14px;color:#3838e0;transform:scaleX(0.9132);">0</span>
<span class="t " style="left:400px;top:439px;font-size:9.6px;line-height:14px;color:#000;transform:scaleX(0.9366);">0</span>
<div style="left:199.5px;top:451.66px;width:132px;height:11.18px;background:#8fa5ec;"></div>
<div style="left:331.5px;top:451.66px;width:66.5px;height:11.18px;background:#f3f3fd;"></div>
<div style="left:398px;top:451.66px;width:111.5px;height:11.18px;background:#e8e8fa;"></div>
<span class="t " style="left:185.5px;top:451px;font-size:9.6px;line-height:14px;color:#38a038;transform:scaleX(0.6962);">1…</span>
<span class="t " style="left:201px;top:451px;font-size:9.6px;line-height:14px;color:#000;transform:scaleX(0.8650);">RVA of GlobalPtr</span>
<span class="t " style="left:333.3px;top:451px;font-size:9.6px;line-height:14px;color:#3838e0;transform:scaleX(0.9132);">0</span>
<span class="t " style="left:400px;top:451px;font-size:9.6px;line-height:14px;color:#000;transform:scaleX(0.9366);">0</span>
<div style="left:183.5px;top:462.84px;width:793.0px;height:11.18px;background:#f5f5f5;"></div>
<div style="left:199.5px;top:462.84px;width:132px;height:11.18px;background:#8ba1e8;"></div>
<div style="left:331.5px;top:462.84px;width:66.5px;height:11.18px;background:#ececf8;"></div>
<div style="left:398px;top:462.84px;width:111.5px;height:11.18px;background:#e3e3f5;"></div>
<span class="t " style="left:185.5px;top:462px;font-size:9.6px;line-height:14px;color:#38a038;transform:scaleX(0.6962);">1…</span>
<span class="t " style="left:201px;top:462px;font-size:9.6px;line-height:14px;color:#000;transform:scaleX(0.7669);">TLS Directory</span>
<span class="t " style="left:333.3px;top:462px;font-size:9.6px;line-height:14px;color:#3838e0;transform:scaleX(0.9132);">0</span>
<span class="t " style="left:400px;top:462px;font-size:9.6px;line-height:14px;color:#000;transform:scaleX(0.9366);">0</span>
<div style="left:199.5px;top:474.02px;width:132px;height:11.18px;background:#8fa5ec;"></div>
<div style="left:331.5px;top:474.02px;width:66.5px;height:11.18px;background:#f3f3fd;"></div>
<div style="left:398px;top:474.02px;width:111.5px;height:11.18px;background:#e8e8fa;"></div>
<span class="t " style="left:185.5px;top:473px;font-size:9.6px;line-height:14px;color:#38a038;transform:scaleX(0.6962);">1…</span>
<span class="t " style="left:201px;top:473px;font-size:9.6px;line-height:14px;color:#000;transform:scaleX(0.8839);">Load Configuration Directory</span>
<span class="t " style="left:333.3px;top:473px;font-size:9.6px;line-height:14px;color:#3838e0;transform:scaleX(0.8767);">19638</span>
<span class="t " style="left:400px;top:473px;font-size:9.6px;line-height:14px;color:#000;transform:scaleX(0.9366);">40</span>
<div style="left:183.5px;top:485.2px;width:793.0px;height:11.18px;background:#f5f5f5;"></div>
<div style="left:199.5px;top:485.2px;width:132px;height:11.18px;background:#8ba1e8;"></div>
<div style="left:331.5px;top:485.2px;width:66.5px;height:11.18px;background:#ececf8;"></div>
<div style="left:398px;top:485.2px;width:111.5px;height:11.18px;background:#e3e3f5;"></div>
<span class="t " style="left:185.5px;top:484px;font-size:9.6px;line-height:14px;color:#38a038;transform:scaleX(0.6962);">1…</span>
<span class="t " style="left:201px;top:484px;font-size:9.6px;line-height:14px;color:#000;transform:scaleX(0.8756);">Bound Import Directory in headers</span>
<span class="t " style="left:333.3px;top:484px;font-size:9.6px;line-height:14px;color:#3838e0;transform:scaleX(0.9132);">0</span>
<span class="t " style="left:400px;top:484px;font-size:9.6px;line-height:14px;color:#000;transform:scaleX(0.9366);">0</span>
<div style="left:199.5px;top:496.38px;width:132px;height:11.18px;background:#8fa5ec;"></div>
<div style="left:331.5px;top:496.38px;width:66.5px;height:11.18px;background:#f3f3fd;"></div>
<div style="left:398px;top:496.38px;width:111.5px;height:11.18px;background:#e8e8fa;"></div>
<span class="t " style="left:185.5px;top:495px;font-size:9.6px;line-height:14px;color:#38a038;transform:scaleX(0.6962);">1…</span>
<span class="t " style="left:201px;top:495px;font-size:9.6px;line-height:14px;color:#000;transform:scaleX(0.8445);">Import Address Table</span>
<span class="t " style="left:333.3px;top:495px;font-size:9.6px;line-height:14px;color:#3838e0;transform:scaleX(0.8617);">1D000</span>
<span class="t " style="left:400px;top:495px;font-size:9.6px;line-height:14px;color:#000;transform:scaleX(0.7950);">2C8</span>
<div style="left:183.5px;top:507.56px;width:793.0px;height:11.18px;background:#f5f5f5;"></div>
<div style="left:199.5px;top:507.56px;width:132px;height:11.18px;background:#8ba1e8;"></div>
<div style="left:331.5px;top:507.56px;width:66.5px;height:11.18px;background:#ececf8;"></div>
<div style="left:398px;top:507.56px;width:111.5px;height:11.18px;background:#e3e3f5;"></div>
<span class="t " style="left:185.5px;top:507px;font-size:9.6px;line-height:14px;color:#38a038;transform:scaleX(0.6962);">1…</span>
<span class="t " style="left:201px;top:507px;font-size:9.6px;line-height:14px;color:#000;transform:scaleX(0.8639);">Delay Load Import Descriptors</span>
<span class="t " style="left:333.3px;top:507px;font-size:9.6px;line-height:14px;color:#3838e0;transform:scaleX(0.9132);">0</span>
<span class="t " style="left:400px;top:507px;font-size:9.6px;line-height:14px;color:#000;transform:scaleX(0.9366);">0</span>
<div style="left:199.5px;top:518.74px;width:132px;height:11.18px;background:#8fa5ec;"></div>
<div style="left:331.5px;top:518.74px;width:66.5px;height:11.18px;background:#f3f3fd;"></div>
<div style="left:398px;top:518.74px;width:111.5px;height:11.18px;background:#e8e8fa;"></div>
<span class="t " style="left:185.5px;top:518px;font-size:9.6px;line-height:14px;color:#38a038;transform:scaleX(0.6962);">1…</span>
<span class="t " style="left:201px;top:518px;font-size:9.6px;line-height:14px;color:#000;transform:scaleX(0.8111);">.NET header</span>
<span class="t " style="left:333.3px;top:518px;font-size:9.6px;line-height:14px;color:#3838e0;transform:scaleX(0.9132);">0</span>
<span class="t " style="left:400px;top:518px;font-size:9.6px;line-height:14px;color:#000;transform:scaleX(0.9366);">0</span>
<div style="left:976.5px;top:191px;width:11.5px;height:342px;background:#f0f0f0;"></div>
<div style="left:977px;top:332.7px;width:10.2px;height:189.2px;background:#cdcdcd;"></div>
<svg style="left:2.5999999999999996px;top:31.400000000000006px" width="8" height="8" viewBox="0 0 8 8"><path d="M1.2999999999999998 2.5 L4 5.5 L6.7 2.5" fill="none" stroke="#3c3c3c" stroke-width="1.1"/></svg>
<svg style="left:16.1px;top:67.851px" width="8" height="8" viewBox="0 0 8 8"><path d="M1.2999999999999998 2.5 L4 5.5 L6.7 2.5" fill="none" stroke="#3c3c3c" stroke-width="1.1"/></svg>
<svg style="left:16.1px;top:128.936px" width="8" height="8" viewBox="0 0 8 8"><path d="M1.2999999999999998 2.5 L4 5.5 L6.7 2.5" fill="none" stroke="#3c3c3c" stroke-width="1.1"/></svg>
<svg style="left:29.5px;top:152.97px" width="8" height="8" viewBox="0 0 8 8"><path d="M1.2999999999999998 2.5 L4 5.5 L6.7 2.5" fill="none" stroke="#3c3c3c" stroke-width="1.1"/></svg>
<svg style="left:15px;top:31px" width="10" height="9" viewBox="0 0 10 9"><rect x="0.4" y="0.4" width="9.2" height="8" rx="1" fill="#f4f4f4" stroke="#c9c9c9" stroke-width="0.7"/><rect x="0.8" y="0.7" width="8.4" height="1.6" fill="#35a7e6"/><rect x="4" y="4.2" width="5" height="3.8" fill="#5a5a5a"/><path d="M4.8 5.2h3.4M4.8 6.3h3.4" stroke="#d0d0d0" stroke-width="0.5"/></svg>
<svg style="left:29.2px;top:42.9px" width="8" height="9" viewBox="0 0 8 9"><rect x="0.3" y="0.3" width="7.2" height="8.4" fill="#f1f1ef" stroke="#e2e2e0" stroke-width="0.6"/><path d="M1.5 2.5H6 M1.5 4H6 M1.5 5.5H4" stroke="#cfcfcc" stroke-width="0.7"/><path d="M5 6.2L6.8 5.2L6.3 6.9Z" fill="#c8c4ba"/></svg>
<svg style="left:29.2px;top:67.4px" width="8" height="9" viewBox="0 0 8 9"><rect x="0.3" y="0.3" width="7.2" height="8.4" fill="#f1f1ef" stroke="#e2e2e0" stroke-width="0.6"/><path d="M1.5 2.5H6 M1.5 4H6 M1.5 5.5H4" stroke="#cfcfcc" stroke-width="0.7"/><path d="M5 6.2L6.8 5.2L6.3 6.9Z" fill="#c8c4ba"/></svg>
<svg style="left:29.2px;top:116.2px" width="8" height="9" viewBox="0 0 8 9"><rect x="0.3" y="0.3" width="7.2" height="8.4" fill="#f1f1ef" stroke="#e2e2e0" stroke-width="0.6"/><path d="M1.5 2.5H6 M1.5 4H6 M1.5 5.5H4" stroke="#cfcfcc" stroke-width="0.7"/><path d="M5 6.2L6.8 5.2L6.3 6.9Z" fill="#c8c4ba"/></svg>
<svg style="left:42.4px;top:79.6px" width="8" height="9" viewBox="0 0 8 9"><rect x="0.3" y="0.3" width="7.2" height="8.4" fill="#f1f1ef" stroke="#e2e2e0" stroke-width="0.6"/><path d="M1.5 2.5H6 M1.5 4H6 M1.5 5.5H4" stroke="#cfcfcc" stroke-width="0.7"/><path d="M5 6.2L6.8 5.2L6.3 6.9Z" fill="#c8c4ba"/></svg>
<svg style="left:42.4px;top:91.8px" width="8" height="9" viewBox="0 0 8 9"><rect x="0.3" y="0.3" width="7.2" height="8.4" fill="#f1f1ef" stroke="#e2e2e0" stroke-width="0.6"/><path d="M1.5 2.5H6 M1.5 4H6 M1.5 5.5H4" stroke="#cfcfcc" stroke-width="0.7"/><path d="M5 6.2L6.8 5.2L6.3 6.9Z" fill="#c8c4ba"/></svg>
<svg style="left:42.4px;top:104.0px" width="8" height="9" viewBox="0 0 8 9"><rect x="0.3" y="0.3" width="7.2" height="8.4" fill="#f1f1ef" stroke="#e2e2e0" stroke-width="0.6"/><path d="M1.5 2.5H6 M1.5 4H6 M1.5 5.5H4" stroke="#cfcfcc" stroke-width="0.7"/><path d="M5 6.2L6.8 5.2L6.3 6.9Z" fill="#c8c4ba"/></svg>
<div style="left:29.7px;top:55.9px;width:7.2px;height:7.4px;background:#0c0c0c;border-radius:0.6px;"></div>
<div style="left:30.4px;top:57.0px;width:2.6px;height:0.8px;background:#8a8a8a;"></div>
<svg style="left:42px;top:139.9px" width="9" height="9" viewBox="0 0 9 9"><path d="M4.7 0.4h2.4v2.1h1.55v1.9h-2.4v1.7h2.4v2.55h-2.9v-1.75h-1.7v1.75h-1.9v-1.95h-1.95v-1.75h1.95v-2.45h2.55z" fill="#22b83a" stroke="#2dbb45" stroke-width="0.5" stroke-linejoin="round"/><rect x="4.9" y="0.7" width="2" height="2.4" fill="#45d060"/><rect x="6.3" y="6.6" width="2" height="1.8" fill="#0cbc1c"/></svg>
<svg style="left:42px;top:152.1px" width="9" height="9" viewBox="0 0 9 9"><path d="M4.7 0.4h2.4v2.1h1.55v1.9h-2.4v1.7h2.4v2.55h-2.9v-1.75h-1.7v1.75h-1.9v-1.95h-1.95v-1.75h1.95v-2.45h2.55z" fill="#22b83a" stroke="#2dbb45" stroke-width="0.5" stroke-linejoin="round"/><rect x="4.9" y="0.7" width="2" height="2.4" fill="#45d060"/><rect x="6.3" y="6.6" width="2" height="1.8" fill="#0cbc1c"/><path d="M0.2 1.9h2.3v-1.1l2.2 1.9l-2.2 1.9v-1.1h-2.3z" fill="#23466e"/></svg>
<svg style="left:42px;top:176.5px" width="9" height="9" viewBox="0 0 9 9"><path d="M4.7 0.4h2.4v2.1h1.55v1.9h-2.4v1.7h2.4v2.55h-2.9v-1.75h-1.7v1.75h-1.9v-1.95h-1.95v-1.75h1.95v-2.45h2.55z" fill="#22b83a" stroke="#2dbb45" stroke-width="0.5" stroke-linejoin="round"/><rect x="4.9" y="0.7" width="2" height="2.4" fill="#45d060"/><rect x="6.3" y="6.6" width="2" height="1.8" fill="#0cbc1c"/></svg>
<svg style="left:42px;top:188.7px" width="9" height="9" viewBox="0 0 9 9"><path d="M4.7 0.4h2.4v2.1h1.55v1.9h-2.4v1.7h2.4v2.55h-2.9v-1.75h-1.7v1.75h-1.9v-1.95h-1.95v-1.75h1.95v-2.45h2.55z" fill="#22b83a" stroke="#2dbb45" stroke-width="0.5" stroke-linejoin="round"/><rect x="4.9" y="0.7" width="2" height="2.4" fill="#45d060"/><rect x="6.3" y="6.6" width="2" height="1.8" fill="#0cbc1c"/></svg>
<svg style="left:42px;top:200.9px" width="9" height="9" viewBox="0 0 9 9"><path d="M4.7 0.4h2.4v2.1h1.55v1.9h-2.4v1.7h2.4v2.55h-2.9v-1.75h-1.7v1.75h-1.9v-1.95h-1.95v-1.75h1.95v-2.45h2.55z" fill="#22b83a" stroke="#2dbb45" stroke-width="0.5" stroke-linejoin="round"/><rect x="4.9" y="0.7" width="2" height="2.4" fill="#45d060"/><rect x="6.3" y="6.6" width="2" height="1.8" fill="#0cbc1c"/></svg>
<svg style="left:42px;top:213.2px" width="9" height="9" viewBox="0 0 9 9"><path d="M4.7 0.4h2.4v2.1h1.55v1.9h-2.4v1.7h2.4v2.55h-2.9v-1.75h-1.7v1.75h-1.9v-1.95h-1.95v-1.75h1.95v-2.45h2.55z" fill="#22b83a" stroke="#2dbb45" stroke-width="0.5" stroke-linejoin="round"/><rect x="4.9" y="0.7" width="2" height="2.4" fill="#45d060"/><rect x="6.3" y="6.6" width="2" height="1.8" fill="#0cbc1c"/></svg>
<svg style="left:42px;top:225.4px" width="9" height="9" viewBox="0 0 9 9"><path d="M4.7 0.4h2.4v2.1h1.55v1.9h-2.4v1.7h2.4v2.55h-2.9v-1.75h-1.7v1.75h-1.9v-1.95h-1.95v-1.75h1.95v-2.45h2.55z" fill="#22b83a" stroke="#2dbb45" stroke-width="0.5" stroke-linejoin="round"/><rect x="4.9" y="0.7" width="2" height="2.4" fill="#45d060"/><rect x="6.3" y="6.6" width="2" height="1.8" fill="#0cbc1c"/></svg>
<svg style="left:42px;top:237.6px" width="9" height="9" viewBox="0 0 9 9"><path d="M4.7 0.4h2.4v2.1h1.55v1.9h-2.4v1.7h2.4v2.55h-2.9v-1.75h-1.7v1.75h-1.9v-1.95h-1.95v-1.75h1.95v-2.45h2.55z" fill="#22b83a" stroke="#2dbb45" stroke-width="0.5" stroke-linejoin="round"/><rect x="4.9" y="0.7" width="2" height="2.4" fill="#45d060"/><rect x="6.3" y="6.6" width="2" height="1.8" fill="#0cbc1c"/></svg>
<svg style="left:42px;top:249.8px" width="9" height="9" viewBox="0 0 9 9"><path d="M4.7 0.4h2.4v2.1h1.55v1.9h-2.4v1.7h2.4v2.55h-2.9v-1.75h-1.7v1.75h-1.9v-1.95h-1.95v-1.75h1.95v-2.45h2.55z" fill="#22b83a" stroke="#2dbb45" stroke-width="0.5" stroke-linejoin="round"/><rect x="4.9" y="0.7" width="2" height="2.4" fill="#45d060"/><rect x="6.3" y="6.6" width="2" height="1.8" fill="#0cbc1c"/></svg>
<svg style="left:55px;top:165.7px" width="9.5" height="7" viewBox="0 0 9.5 7"><path d="M0.3 2.1H5.2250000000000005V0.3L9.2 3.5L5.2250000000000005 6.7V4.8999999999999995H0.3Z" fill="#2f8fdf" stroke="#2277c4" stroke-width="0.4"/></svg>
<svg style="left:126.5px;top:31px" width="8" height="8" viewBox="0 0 8 8"><path d="M1.5 5.3 L4 2.7 L6.5 5.3" fill="none" stroke="#c4c4c4" stroke-width="1.0"/></svg>
<svg style="left:126.5px;top:525.5px" width="8" height="8" viewBox="0 0 8 8"><path d="M1.5 2.7 L4 5.3 L6.5 2.7" fill="none" stroke="#c4c4c4" stroke-width="1.0"/></svg>
<svg style="left:143.5px;top:33px" width="8" height="8" viewBox="0 0 8 8"><path d="M1.3 1.3L6.3 6.3M6.3 1.3L1.3 6.3" stroke="#222" stroke-width="1.3"/></svg>
<svg style="left:144.7px;top:47.6px" width="7" height="7" viewBox="0 0 7 7"><rect x="0.6" y="2.2" width="3.9" height="3.6" fill="none" stroke="#333" stroke-width="0.9"/><path d="M1.9 2.2V0.8H6V4.4H4.6" fill="none" stroke="#333" stroke-width="0.9"/></svg>
<span class="t " style="left:0px;top:-7px;font-size:9.6px;line-height:14px;color:#000;transform:scaleX(0.8173);left:140px;top:533.5px;transform-origin:0 0;transform:rotate(-90deg) scaleX(0.8173);">TextView__patch.exe</span>
<div style="left:159px;top:32.6px;width:1px;height:1px;background:#b4b4b4;"></div>
<div style="left:159px;top:34.7px;width:1px;height:1px;background:#b4b4b4;"></div>
<div style="left:159px;top:36.800000000000004px;width:1px;height:1px;background:#b4b4b4;"></div>
<div style="left:159px;top:38.900000000000006px;width:1px;height:1px;background:#b4b4b4;"></div>
<svg style="left:164.3px;top:33px" width="7.2" height="6.4" viewBox="0 0 7.2 6.4"><path d="M0.3 1.92H3.9600000000000004V0.3L6.9 3.2L3.9600000000000004 6.1000000000000005V4.4799999999999995H0.3Z" fill="#2f8fdf" stroke="#2277c4" stroke-width="0.4"/></svg>
<svg style="left:180.5px;top:32.5px" width="8" height="8" viewBox="0 0 8 8"><rect x="2.1" y="1" width="4.8" height="4.8" fill="#eef7fd" stroke="#4aa8e8" stroke-width="1"/><rect x="1.6" y="0.5" width="5.8" height="1.5" fill="#4aa8e8"/><path d="M0.3 4.5h2.2v-1.1l2 1.6l-2 1.6v-1.1h-2.2z" fill="#18a030"/></svg>
<svg style="left:197px;top:32.5px" width="8" height="8" viewBox="0 0 8 8"><path d="M2.4 0.6h3.2l1.6 1.6v4.7h-4.8z" fill="#eeeeee" stroke="#bcbcbc" stroke-width="0.6"/><path d="M0.8 4.5h2v-1.1l1.9 1.6l-1.9 1.6v-1.1h-2z" fill="#18a030"/></svg>
<svg style="left:213.6px;top:32.2px" width="8" height="8" viewBox="0 0 8 8"><path d="M1.6 2.4C3.4 0.9 6.6 1.6 6.6 4.4 6.6 5.3 6.3 6 5.8 6.5" fill="none" stroke="#3a78e0" stroke-width="1.5"/><path d="M0.2 0.6L3.4 0.9L1 3.9Z" fill="#2f6fdf"/></svg>
<svg style="left:231px;top:31.8px" width="8" height="8" viewBox="0 0 8 8"><path d="M5.2 0.9L6.5 2.1L2.6 6.6L0.9 7.3L1.5 5.5Z" fill="#9c9c9c"/></svg>
<svg style="left:247px;top:32.5px" width="8" height="8" viewBox="0 0 8 8"><rect x="0.5" y="0.8" width="4" height="4.6" fill="#e4e4e4" stroke="#c4c4c4" stroke-width="0.5"/><path d="M3 3h2.8l1.6 1.5l-1.6 1.5h-2.8z" fill="#d0d0d0" stroke="#b4b4b4" stroke-width="0.4"/></svg>
<svg style="left:263.5px;top:33px" width="7" height="7" viewBox="0 0 7 7"><path d="M3.5 0.3L4.5 2.4L6.8 2.7L5.1 4.3L5.5 6.6L3.5 5.5L1.5 6.6L1.9 4.3L0.2 2.7L2.5 2.4Z" fill="#f6c414" stroke="#e0a800" stroke-width="0.3"/></svg>
<span class="t m b" style="left:577.8px;top:45px;font-size:6.7px;line-height:14px;color:#000;"><i>0</i></span>
<div style="left:575.0px;top:44px;width:1px;height:14px;background:#eeeeee;"></div>
<span class="t m b" style="left:587.4px;top:45px;font-size:6.7px;line-height:14px;color:#000;">1</span>
<div style="left:584.6px;top:44px;width:1px;height:14px;background:#eeeeee;"></div>
<span class="t m b" style="left:597.0px;top:45px;font-size:6.7px;line-height:14px;color:#000;">2</span>
<div style="left:594.2px;top:44px;width:1px;height:14px;background:#eeeeee;"></div>
<span class="t m b" style="left:606.5999999999999px;top:45px;font-size:6.7px;line-height:14px;color:#000;">3</span>
<div style="left:603.8px;top:44px;width:1px;height:14px;background:#eeeeee;"></div>
<span class="t m b" style="left:616.1999999999999px;top:45px;font-size:6.7px;line-height:14px;color:#000;">4</span>
<div style="left:613.4px;top:44px;width:1px;height:14px;background:#eeeeee;"></div>
<span class="t m b" style="left:625.8px;top:45px;font-size:6.7px;line-height:14px;color:#000;">5</span>
<div style="left:623.0px;top:44px;width:1px;height:14px;background:#eeeeee;"></div>
<span class="t m b" style="left:635.4px;top:45px;font-size:6.7px;line-height:14px;color:#000;">6</span>
<div style="left:632.6px;top:44px;width:1px;height:14px;background:#eeeeee;"></div>
<span class="t m b" style="left:645.0px;top:45px;font-size:6.7px;line-height:14px;color:#000;">7</span>
<div style="left:642.2px;top:44px;width:1px;height:14px;background:#eeeeee;"></div>
<span class="t m b" style="left:654.5999999999999px;top:45px;font-size:6.7px;line-height:14px;color:#000;">8</span>
<div style="left:651.8px;top:44px;width:1px;height:14px;background:#eeeeee;"></div>
<span class="t m b" style="left:664.1999999999999px;top:45px;font-size:6.7px;line-height:14px;color:#000;">9</span>
<div style="left:661.4px;top:44px;width:1px;height:14px;background:#eeeeee;"></div>
<span class="t m b" style="left:673.8px;top:45px;font-size:6.7px;line-height:14px;color:#000;">A</span>
<div style="left:671.0px;top:44px;width:1px;height:14px;background:#eeeeee;"></div>
<span class="t m b" style="left:683.4px;top:45px;font-size:6.7px;line-height:14px;color:#000;">B</span>
<div style="left:680.6px;top:44px;width:1px;height:14px;background:#eeeeee;"></div>
<span class="t m b" style="left:693.0px;top:45px;font-size:6.7px;line-height:14px;color:#000;">C</span>
<div style="left:690.2px;top:44px;width:1px;height:14px;background:#eeeeee;"></div>
<span class="t m b" style="left:702.5999999999999px;top:45px;font-size:6.7px;line-height:14px;color:#000;">D</span>
<div style="left:699.8px;top:44px;width:1px;height:14px;background:#eeeeee;"></div>
<span class="t m b" style="left:712.1999999999999px;top:45px;font-size:6.7px;line-height:14px;color:#000;">E</span>
<div style="left:709.4px;top:44px;width:1px;height:14px;background:#eeeeee;"></div>
<span class="t m b" style="left:721.8px;top:45px;font-size:6.7px;line-height:14px;color:#000;">F</span>
<div style="left:719.0px;top:44px;width:1px;height:14px;background:#eeeeee;"></div>
<div style="left:728.6px;top:44px;width:1px;height:14px;background:#eeeeee;"></div>
<div style="left:575px;top:58px;width:404px;height:112px;overflow:hidden;">
<span class="t m" style="left:2.8px;top:0px;font-size:6.7px;line-height:14px;color:#ececf6;">é</span>
<span class="t m" style="left:12.399999999999999px;top:0px;font-size:6.7px;line-height:14px;color:#ececf6;">.</span>
<span class="t m" style="left:22.0px;top:0px;font-size:6.7px;line-height:14px;color:#ececf6;">.</span>
<span class="t m" style="left:31.599999999999998px;top:0px;font-size:6.7px;line-height:14px;color:#ececf6;">.</span>
<span class="t m" style="left:41.199999999999996px;top:0px;font-size:6.7px;line-height:14px;color:#ececf6;">.</span>
<span class="t m" style="left:50.8px;top:0px;font-size:6.7px;line-height:14px;color:#ececf6;">é</span>
<span class="t m" style="left:60.39999999999999px;top:0px;font-size:6.7px;line-height:14px;color:#ececf6;">&quot;</span>
<span class="t m" style="left:70.0px;top:0px;font-size:6.7px;line-height:14px;color:#ececf6;">5</span>
<span class="t m" style="left:79.6px;top:0px;font-size:6.7px;line-height:14px;color:#ececf6;">.</span>
<span class="t m" style="left:89.19999999999999px;top:0px;font-size:6.7px;line-height:14px;color:#ececf6;">.</span>
<span class="t m" style="left:98.8px;top:0px;font-size:6.7px;line-height:14px;color:#ececf6;">é</span>
<span class="t m" style="left:108.39999999999999px;top:0px;font-size:6.7px;line-height:14px;color:#ececf6;">½</span>
<span class="t m" style="left:117.99999999999999px;top:0px;font-size:6.7px;line-height:14px;color:#ececf6;">.</span>
<span class="t m" style="left:127.6px;top:0px;font-size:6.7px;line-height:14px;color:#ececf6;">.</span>
<span class="t m" style="left:137.20000000000002px;top:0px;font-size:6.7px;line-height:14px;color:#ececf6;">.</span>
<span class="t m" style="left:146.8px;top:0px;font-size:6.7px;line-height:14px;color:#ececf6;">é</span>
<span class="t m" style="left:2.8px;top:11px;font-size:6.7px;line-height:14px;color:#ececf6;">»</span>
<span class="t m" style="left:12.399999999999999px;top:11px;font-size:6.7px;line-height:14px;color:#ececf6;">L</span>
<span class="t m" style="left:22.0px;top:11px;font-size:6.7px;line-height:14px;color:#ececf6;">.</span>
<span class="t m" style="left:31.599999999999998px;top:11px;font-size:6.7px;line-height:14px;color:#ececf6;">.</span>
<span class="t m" style="left:41.199999999999996px;top:11px;font-size:6.7px;line-height:14px;color:#ececf6;">é</span>
<span class="t m" style="left:50.8px;top:11px;font-size:6.7px;line-height:14px;color:#ececf6;">.</span>
<span class="t m" style="left:60.39999999999999px;top:11px;font-size:6.7px;line-height:14px;color:#ececf6;">L</span>
<span class="t m" style="left:70.0px;top:11px;font-size:6.7px;line-height:14px;color:#ececf6;">.</span>
<span class="t m" style="left:79.6px;top:11px;font-size:6.7px;line-height:14px;color:#ececf6;">.</span>
<span class="t m" style="left:89.19999999999999px;top:11px;font-size:6.7px;line-height:14px;color:#ececf6;">é</span>
<span class="t m" style="left:98.8px;top:11px;font-size:6.7px;line-height:14px;color:#ececf6;">.</span>
<span class="t m" style="left:108.39999999999999px;top:11px;font-size:6.7px;line-height:14px;color:#ececf6;">M</span>
<span class="t m" style="left:117.99999999999999px;top:11px;font-size:6.7px;line-height:14px;color:#ececf6;">.</span>
<span class="t m" style="left:127.6px;top:11px;font-size:6.7px;line-height:14px;color:#ececf6;">.</span>
<span class="t m" style="left:137.20000000000002px;top:11px;font-size:6.7px;line-height:14px;color:#ececf6;">é</span>
<span class="t m" style="left:146.8px;top:11px;font-size:6.7px;line-height:14px;color:#ececf6;">p</span>
<span class="t m" style="left:2.8px;top:23px;font-size:6.7px;line-height:14px;color:#ececf6;">L</span>
<span class="t m" style="left:12.399999999999999px;top:23px;font-size:6.7px;line-height:14px;color:#ececf6;">.</span>
<span class="t m" style="left:22.0px;top:23px;font-size:6.7px;line-height:14px;color:#ececf6;">.</span>
<span class="t m" style="left:31.599999999999998px;top:23px;font-size:6.7px;line-height:14px;color:#ececf6;">é</span>
<span class="t m" style="left:41.199999999999996px;top:23px;font-size:6.7px;line-height:14px;color:#ececf6;">.</span>
<span class="t m" style="left:50.8px;top:23px;font-size:6.7px;line-height:14px;color:#ececf6;">&quot;</span>
<span class="t m" style="left:60.39999999999999px;top:23px;font-size:6.7px;line-height:14px;color:#ececf6;">.</span>
<span class="t m" style="left:70.0px;top:23px;font-size:6.7px;line-height:14px;color:#ececf6;">.</span>
<span class="t m" style="left:79.6px;top:23px;font-size:6.7px;line-height:14px;color:#ececf6;">é</span>
<span class="t m" style="left:89.19999999999999px;top:23px;font-size:6.7px;line-height:14px;color:#ececf6;">.</span>
<span class="t m" style="left:98.8px;top:23px;font-size:6.7px;line-height:14px;color:#ececf6;">.</span>
<span class="t m" style="left:108.39999999999999px;top:23px;font-size:6.7px;line-height:14px;color:#ececf6;">.</span>
<span class="t m" style="left:117.99999999999999px;top:23px;font-size:6.7px;line-height:14px;color:#ececf6;">.</span>
<span class="t m" style="left:127.6px;top:23px;font-size:6.7px;line-height:14px;color:#ececf6;">é</span>
<span class="t m" style="left:137.20000000000002px;top:23px;font-size:6.7px;line-height:14px;color:#ececf6;">.</span>
<span class="t m" style="left:146.8px;top:23px;font-size:6.7px;line-height:14px;color:#ececf6;">&amp;</span>
<span class="t m" style="left:2.8px;top:35px;font-size:6.7px;line-height:14px;color:#ececf6;">.</span>
<span class="t m" style="left:12.399999999999999px;top:35px;font-size:6.7px;line-height:14px;color:#ececf6;">.</span>
<span class="t m" style="left:22.0px;top:35px;font-size:6.7px;line-height:14px;color:#ececf6;">é</span>
<span class="t m" style="left:31.599999999999998px;top:35px;font-size:6.7px;line-height:14px;color:#ececf6;">¥</span>
<span class="t m" style="left:41.199999999999996px;top:35px;font-size:6.7px;line-height:14px;color:#ececf6;">:</span>
<span class="t m" style="left:50.8px;top:35px;font-size:6.7px;line-height:14px;color:#ececf6;">.</span>
<span class="t m" style="left:60.39999999999999px;top:35px;font-size:6.7px;line-height:14px;color:#ececf6;">.</span>
<span class="t m" style="left:70.0px;top:35px;font-size:6.7px;line-height:14px;color:#ececf6;">é</span>
<span class="t m" style="left:79.6px;top:35px;font-size:6.7px;line-height:14px;color:#ececf6;">@</span>
<span class="t m" style="left:89.19999999999999px;top:35px;font-size:6.7px;line-height:14px;color:#ececf6;">1</span>
<span class="t m" style="left:98.8px;top:35px;font-size:6.7px;line-height:14px;color:#ececf6;">.</span>
<span class="t m" style="left:108.39999999999999px;top:35px;font-size:6.7px;line-height:14px;color:#ececf6;">.</span>
<span class="t m" style="left:117.99999999999999px;top:35px;font-size:6.7px;line-height:14px;color:#ececf6;">é</span>
<span class="t m" style="left:127.6px;top:35px;font-size:6.7px;line-height:14px;color:#ececf6;">.</span>
<span class="t m" style="left:137.20000000000002px;top:35px;font-size:6.7px;line-height:14px;color:#ececf6;"><i>0</i></span>
<span class="t m" style="left:146.8px;top:35px;font-size:6.7px;line-height:14px;color:#ececf6;">.</span>
<span class="t m" style="left:2.8px;top:46px;font-size:6.7px;line-height:14px;color:#ececf6;">.</span>
<span class="t m" style="left:12.399999999999999px;top:46px;font-size:6.7px;line-height:14px;color:#ececf6;">é</span>
<span class="t m" style="left:22.0px;top:46px;font-size:6.7px;line-height:14px;color:#ececf6;">q</span>
<span class="t m" style="left:31.599999999999998px;top:46px;font-size:6.7px;line-height:14px;color:#ececf6;">L</span>
<span class="t m" style="left:41.199999999999996px;top:46px;font-size:6.7px;line-height:14px;color:#ececf6;">.</span>
<span class="t m" style="left:50.8px;top:46px;font-size:6.7px;line-height:14px;color:#ececf6;">.</span>
<span class="t m" style="left:60.39999999999999px;top:46px;font-size:6.7px;line-height:14px;color:#ececf6;">é</span>
<span class="t m" style="left:70.0px;top:46px;font-size:6.7px;line-height:14px;color:#ececf6;">\</span>
<span class="t m" style="left:79.6px;top:46px;font-size:6.7px;line-height:14px;color:#ececf6;">.</span>
<span class="t m" style="left:89.19999999999999px;top:46px;font-size:6.7px;line-height:14px;color:#ececf6;">.</span>
<span class="t m" style="left:98.8px;top:46px;font-size:6.7px;line-height:14px;color:#ececf6;">.</span>
<span class="t m" style="left:108.39999999999999px;top:46px;font-size:6.7px;line-height:14px;color:#ececf6;">é</span>
<span class="t m" style="left:117.99999999999999px;top:46px;font-size:6.7px;line-height:14px;color:#ececf6;">Û</span>
<span class="t m" style="left:127.6px;top:46px;font-size:6.7px;line-height:14px;color:#ececf6;">.</span>
<span class="t m" style="left:137.20000000000002px;top:46px;font-size:6.7px;line-height:14px;color:#ececf6;">.</span>
<span class="t m" style="left:146.8px;top:46px;font-size:6.7px;line-height:14px;color:#ececf6;">.</span>
<span class="t m" style="left:2.8px;top:58px;font-size:6.7px;line-height:14px;color:#ececf6;">é</span>
<span class="t m" style="left:12.399999999999999px;top:58px;font-size:6.7px;line-height:14px;color:#ececf6;">&#x27;</span>
<span class="t m" style="left:22.0px;top:58px;font-size:6.7px;line-height:14px;color:#ececf6;">#</span>
<span class="t m" style="left:31.599999999999998px;top:58px;font-size:6.7px;line-height:14px;color:#ececf6;">.</span>
<span class="t m" style="left:41.199999999999996px;top:58px;font-size:6.7px;line-height:14px;color:#ececf6;">.</span>
<span class="t m" style="left:50.8px;top:58px;font-size:6.7px;line-height:14px;color:#ececf6;">é</span>
<span class="t m" style="left:60.39999999999999px;top:58px;font-size:6.7px;line-height:14px;color:#ececf6;">.</span>
<span class="t m" style="left:70.0px;top:58px;font-size:6.7px;line-height:14px;color:#ececf6;">1</span>
<span class="t m" style="left:79.6px;top:58px;font-size:6.7px;line-height:14px;color:#ececf6;">.</span>
<span class="t m" style="left:89.19999999999999px;top:58px;font-size:6.7px;line-height:14px;color:#ececf6;">.</span>
<span class="t m" style="left:98.8px;top:58px;font-size:6.7px;line-height:14px;color:#ececf6;">é</span>
<span class="t m" style="left:108.39999999999999px;top:58px;font-size:6.7px;line-height:14px;color:#ececf6;">°</span>
<span class="t m" style="left:117.99999999999999px;top:58px;font-size:6.7px;line-height:14px;color:#ececf6;">K</span>
<span class="t m" style="left:127.6px;top:58px;font-size:6.7px;line-height:14px;color:#ececf6;">.</span>
<span class="t m" style="left:137.20000000000002px;top:58px;font-size:6.7px;line-height:14px;color:#ececf6;">.</span>
<span class="t m" style="left:146.8px;top:58px;font-size:6.7px;line-height:14px;color:#ececf6;">é</span>
<span class="t m" style="left:2.8px;top:70px;font-size:6.7px;line-height:14px;color:#ececf6;">H</span>
<span class="t m" style="left:12.399999999999999px;top:70px;font-size:6.7px;line-height:14px;color:#ececf6;">8</span>
<span class="t m" style="left:22.0px;top:70px;font-size:6.7px;line-height:14px;color:#ececf6;">.</span>
<span class="t m" style="left:31.599999999999998px;top:70px;font-size:6.7px;line-height:14px;color:#ececf6;">.</span>
<span class="t m" style="left:41.199999999999996px;top:70px;font-size:6.7px;line-height:14px;color:#ececf6;">é</span>
<span class="t m" style="left:50.8px;top:70px;font-size:6.7px;line-height:14px;color:#ececf6;">ó</span>
<span class="t m" style="left:60.39999999999999px;top:70px;font-size:6.7px;line-height:14px;color:#ececf6;">3</span>
<span class="t m" style="left:70.0px;top:70px;font-size:6.7px;line-height:14px;color:#ececf6;">.</span>
<span class="t m" style="left:79.6px;top:70px;font-size:6.7px;line-height:14px;color:#ececf6;">.</span>
<span class="t m" style="left:89.19999999999999px;top:70px;font-size:6.7px;line-height:14px;color:#ececf6;">é</span>
<span class="t m" style="left:98.8px;top:70px;font-size:6.7px;line-height:14px;color:#ececf6;">Ý</span>
<span class="t m" style="left:108.39999999999999px;top:70px;font-size:6.7px;line-height:14px;color:#ececf6;">K</span>
<span class="t m" style="left:117.99999999999999px;top:70px;font-size:6.7px;line-height:14px;color:#ececf6;">.</span>
<span class="t m" style="left:127.6px;top:70px;font-size:6.7px;line-height:14px;color:#ececf6;">.</span>
<span class="t m" style="left:137.20000000000002px;top:70px;font-size:6.7px;line-height:14px;color:#ececf6;">é</span>
<span class="t m" style="left:146.8px;top:70px;font-size:6.7px;line-height:14px;color:#ececf6;">.</span>
<span class="t m" style="left:2.8px;top:81px;font-size:6.7px;line-height:14px;color:#ececf6;">)</span>
<span class="t m" style="left:12.399999999999999px;top:81px;font-size:6.7px;line-height:14px;color:#ececf6;">.</span>
<span class="t m" style="left:22.0px;top:81px;font-size:6.7px;line-height:14px;color:#ececf6;">.</span>
<span class="t m" style="left:31.599999999999998px;top:81px;font-size:6.7px;line-height:14px;color:#ececf6;">é</span>
<span class="t m" style="left:41.199999999999996px;top:81px;font-size:6.7px;line-height:14px;color:#ececf6;">.</span>
<span class="t m" style="left:50.8px;top:81px;font-size:6.7px;line-height:14px;color:#ececf6;">.</span>
<span class="t m" style="left:60.39999999999999px;top:81px;font-size:6.7px;line-height:14px;color:#ececf6;">.</span>
<span class="t m" style="left:70.0px;top:81px;font-size:6.7px;line-height:14px;color:#ececf6;">.</span>
<span class="t m" style="left:79.6px;top:81px;font-size:6.7px;line-height:14px;color:#ececf6;">é</span>
<span class="t m" style="left:89.19999999999999px;top:81px;font-size:6.7px;line-height:14px;color:#ececf6;">Ï</span>
<span class="t m" style="left:98.8px;top:81px;font-size:6.7px;line-height:14px;color:#ececf6;">L</span>
<span class="t m" style="left:108.39999999999999px;top:81px;font-size:6.7px;line-height:14px;color:#ececf6;">.</span>
<span class="t m" style="left:117.99999999999999px;top:81px;font-size:6.7px;line-height:14px;color:#ececf6;">.</span>
<span class="t m" style="left:127.6px;top:81px;font-size:6.7px;line-height:14px;color:#ececf6;">é</span>
<span class="t m" style="left:137.20000000000002px;top:81px;font-size:6.7px;line-height:14px;color:#ececf6;">.</span>
<span class="t m" style="left:146.8px;top:81px;font-size:6.7px;line-height:14px;color:#ececf6;">6</span>
<span class="t m" style="left:2.8px;top:93px;font-size:6.7px;line-height:14px;color:#ececf6;">.</span>
<span class="t m" style="left:12.399999999999999px;top:93px;font-size:6.7px;line-height:14px;color:#ececf6;">.</span>
<span class="t m" style="left:22.0px;top:93px;font-size:6.7px;line-height:14px;color:#ececf6;">é</span>
<span class="t m" style="left:31.599999999999998px;top:93px;font-size:6.7px;line-height:14px;color:#ececf6;">U</span>
<span class="t m" style="left:41.199999999999996px;top:93px;font-size:6.7px;line-height:14px;color:#ececf6;">J</span>
<span class="t m" style="left:50.8px;top:93px;font-size:6.7px;line-height:14px;color:#ececf6;">.</span>
<span class="t m" style="left:60.39999999999999px;top:93px;font-size:6.7px;line-height:14px;color:#ececf6;">.</span>
<span class="t m" style="left:70.0px;top:93px;font-size:6.7px;line-height:14px;color:#ececf6;">é</span>
<span class="t m" style="left:79.6px;top:93px;font-size:6.7px;line-height:14px;color:#ececf6;">.</span>
<span class="t m" style="left:89.19999999999999px;top:93px;font-size:6.7px;line-height:14px;color:#ececf6;">.</span>
<span class="t m" style="left:98.8px;top:93px;font-size:6.7px;line-height:14px;color:#ececf6;">.</span>
<span class="t m" style="left:108.39999999999999px;top:93px;font-size:6.7px;line-height:14px;color:#ececf6;">.</span>
<span class="t m" style="left:117.99999999999999px;top:93px;font-size:6.7px;line-height:14px;color:#ececf6;">é</span>
<span class="t m" style="left:127.6px;top:93px;font-size:6.7px;line-height:14px;color:#ececf6;">.</span>
<span class="t m" style="left:137.20000000000002px;top:93px;font-size:6.7px;line-height:14px;color:#ececf6;">9</span>
<span class="t m" style="left:146.8px;top:93px;font-size:6.7px;line-height:14px;color:#ececf6;">.</span>
<span class="t m" style="left:2.8px;top:105px;font-size:6.7px;line-height:14px;color:#ececf6;">.</span>
<span class="t m" style="left:12.399999999999999px;top:105px;font-size:6.7px;line-height:14px;color:#ececf6;">é</span>
<span class="t m" style="left:22.0px;top:105px;font-size:6.7px;line-height:14px;color:#ececf6;">7</span>
<span class="t m" style="left:31.599999999999998px;top:105px;font-size:6.7px;line-height:14px;color:#ececf6;">K</span>
<span class="t m" style="left:41.199999999999996px;top:105px;font-size:6.7px;line-height:14px;color:#ececf6;">.</span>
<span class="t m" style="left:50.8px;top:105px;font-size:6.7px;line-height:14px;color:#ececf6;">.</span>
<span class="t m" style="left:60.39999999999999px;top:105px;font-size:6.7px;line-height:14px;color:#ececf6;">é</span>
<span class="t m" style="left:70.0px;top:105px;font-size:6.7px;line-height:14px;color:#ececf6;">1</span>
<span class="t m" style="left:79.6px;top:105px;font-size:6.7px;line-height:14px;color:#ececf6;">A</span>
<span class="t m" style="left:89.19999999999999px;top:105px;font-size:6.7px;line-height:14px;color:#ececf6;">.</span>
<span class="t m" style="left:98.8px;top:105px;font-size:6.7px;line-height:14px;color:#ececf6;">.</span>
<span class="t m" style="left:108.39999999999999px;top:105px;font-size:6.7px;line-height:14px;color:#ececf6;">é</span>
<span class="t m" style="left:117.99999999999999px;top:105px;font-size:6.7px;line-height:14px;color:#ececf6;">.</span>
<span class="t m" style="left:127.6px;top:105px;font-size:6.7px;line-height:14px;color:#ececf6;">K</span>
<span class="t m" style="left:137.20000000000002px;top:105px;font-size:6.7px;line-height:14px;color:#ececf6;">.</span>
<span class="t m" style="left:146.8px;top:105px;font-size:6.7px;line-height:14px;color:#ececf6;">.</span>
</div>
<svg style="left:980.3px;top:46px" width="8" height="8" viewBox="0 0 8 8"><path d="M1.6 5.3 L4 2.7 L6.4 5.3" fill="none" stroke="#505050" stroke-width="1.0"/></svg>
<svg style="left:980.3px;top:160.4px" width="8" height="8" viewBox="0 0 8 8"><path d="M1.6 2.7 L4 5.3 L6.4 2.7" fill="none" stroke="#505050" stroke-width="1.0"/></svg>
<svg style="left:978.2px;top:192.2px" width="8" height="8" viewBox="0 0 8 8"><path d="M1.6 5.3 L4 2.7 L6.4 5.3" fill="none" stroke="#505050" stroke-width="1.0"/></svg>
<svg style="left:978.2px;top:524px" width="8" height="8" viewBox="0 0 8 8"><path d="M1.6 2.7 L4 5.3 L6.4 2.7" fill="none" stroke="#505050" stroke-width="1.0"/></svg>
<span class="t s" style="left:996.2px;top:43px;font-size:8.8px;line-height:14px;color:#ff0000;transform:scaleX(0.9945);text-shadow:0 0 0.5px #ff0000,0 0 0.5px #ff0000;">414</span>
<div style="left:994px;top:52.8px;width:2.6px;height:0.8px;background:#c89898;"></div>
<div style="left:998px;top:52.8px;width:2.6px;height:0.8px;background:#c89898;"></div>
<div style="left:1002px;top:52.8px;width:2.6px;height:0.8px;background:#c89898;"></div>
<div style="left:1006px;top:52.8px;width:2.6px;height:0.8px;background:#c89898;"></div>
<div style="left:1010px;top:52.8px;width:2.6px;height:0.8px;background:#c89898;"></div>
<div style="left:1014px;top:52.8px;width:2.6px;height:0.8px;background:#c89898;"></div>
<div style="left:1018px;top:52.8px;width:2.6px;height:0.8px;background:#c89898;"></div>
<div style="left:1022px;top:52.8px;width:2.6px;height:0.8px;background:#c89898;"></div>
<div style="left:994px;top:53.6px;width:30px;height:0.6px;background:#707070;"></div>
<div style="left:156.5px;top:175.6px;width:694px;height:14.4px;background:#f0f0f0;border-top:1px solid #d9d9d9;box-sizing:border-box;"></div>
<div style="left:156.5px;top:175.6px;width:1px;height:14.4px;background:#d9d9d9;"></div>
<div style="left:215.9px;top:175.6px;width:1px;height:14.4px;background:#d9d9d9;"></div>
<div style="left:260.8px;top:175.6px;width:1px;height:14.4px;background:#d9d9d9;"></div>
<div style="left:310.6px;top:175.6px;width:1px;height:14.4px;background:#d9d9d9;"></div>
<div style="left:358.9px;top:175.6px;width:1px;height:14.4px;background:#d9d9d9;"></div>
<div style="left:532.3px;top:175.6px;width:1px;height:14.4px;background:#d9d9d9;"></div>
<div style="left:590.2px;top:175.6px;width:1px;height:14.4px;background:#d9d9d9;"></div>
<div style="left:657.4px;top:175.6px;width:1px;height:14.4px;background:#d9d9d9;"></div>
<div style="left:724.8px;top:175.6px;width:1px;height:14.4px;background:#d9d9d9;"></div>
<div style="left:778px;top:175.6px;width:1px;height:14.4px;background:#d9d9d9;"></div>
<div style="left:850px;top:175.6px;width:1px;height:14.4px;background:#d9d9d9;"></div>
<div style="left:404.2px;top:174.6px;width:66px;height:15.4px;background:#fff;border:1px solid #d9d9d9;border-bottom:none;box-sizing:border-box;"></div>
<svg style="left:541.6px;top:179px" width="6" height="5.2" viewBox="0 0 6 5.2"><path d="M0 0.6Q0 0 0.6 0H2.3L3 0.8H5.4Q6 0.8 6 1.4V4.6Q6 5.2 5.4 5.2H0.6Q0 5.2 0 4.6Z" fill="#868686"/></svg>
<svg style="left:599px;top:179px" width="6" height="5.2" viewBox="0 0 6 5.2"><path d="M0 0.6Q0 0 0.6 0H2.3L3 0.8H5.4Q6 0.8 6 1.4V4.6Q6 5.2 5.4 5.2H0.6Q0 5.2 0 4.6Z" fill="#868686"/></svg>
<svg style="left:666.2px;top:179px" width="6" height="5.2" viewBox="0 0 6 5.2"><path d="M0 0.6Q0 0 0.6 0H2.3L3 0.8H5.4Q6 0.8 6 1.4V4.6Q6 5.2 5.4 5.2H0.6Q0 5.2 0 4.6Z" fill="#868686"/></svg>
<svg style="left:734.3px;top:179px" width="6" height="5.2" viewBox="0 0 6 5.2"><path d="M0 0.6Q0 0 0.6 0H2.3L3 0.8H5.4Q6 0.8 6 1.4V4.6Q6 5.2 5.4 5.2H0.6Q0 5.2 0 4.6Z" fill="#868686"/></svg>
<svg style="left:787.4px;top:179px" width="6" height="5.2" viewBox="0 0 6 5.2"><path d="M0 0.6Q0 0 0.6 0H2.3L3 0.8H5.4Q6 0.8 6 1.4V4.6Q6 5.2 5.4 5.2H0.6Q0 5.2 0 4.6Z" fill="#868686"/></svg>
<span class="t " style="left:163px;top:176px;font-size:9.6px;line-height:14px;color:#000;transform:scaleX(0.8382);">Disasm: .text</span>
<span class="t " style="left:225px;top:176px;font-size:9.6px;line-height:14px;color:#000;transform:scaleX(0.8492);">General</span>
<span class="t " style="left:270px;top:176px;font-size:9.6px;line-height:14px;color:#000;transform:scaleX(0.8475);">DOS Hdr</span>
<span class="t " style="left:319.5px;top:176px;font-size:9.6px;line-height:14px;color:#000;transform:scaleX(0.8838);">Rich Hdr</span>
<span class="t " style="left:368px;top:176px;font-size:9.6px;line-height:14px;color:#000;transform:scaleX(0.8928);">File Hdr</span>
<span class="t " style="left:413.5px;top:176px;font-size:9.6px;line-height:14px;color:#000;transform:scaleX(0.9000);">Optional Hdr</span>
<span class="t " style="left:478px;top:176px;font-size:9.6px;line-height:14px;color:#000;transform:scaleX(0.8553);">Section Hdrs</span>
<span class="t " style="left:552.2px;top:176px;font-size:9.6px;line-height:14px;color:#000;transform:scaleX(0.8936);">Imports</span>
<span class="t " style="left:609.7px;top:176px;font-size:9.6px;line-height:14px;color:#000;transform:scaleX(0.8173);">Resources</span>
<span class="t " style="left:676.8px;top:176px;font-size:9.6px;line-height:14px;color:#000;transform:scaleX(0.7843);">BaseReloc.</span>
<span class="t " style="left:744.3px;top:176px;font-size:9.6px;line-height:14px;color:#000;transform:scaleX(0.8555);">Debug</span>
<span class="t " style="left:798.4px;top:176px;font-size:9.6px;line-height:14px;color:#000;transform:scaleX(0.8798);">LoadConfig</span>
<div style="left:941.1px;top:6.7px;width:6.8px;height:0.9px;background:#222;"></div>
<svg style="left:971.7px;top:3.4px" width="8" height="8" viewBox="0 0 8 8"><rect x="0.5" y="1.8" width="5" height="5" fill="none" stroke="#222" stroke-width="0.9"/><path d="M2 1.8V0.5H7V5.5H5.6" fill="none" stroke="#222" stroke-width="0.9"/></svg>
<svg style="left:1003.4px;top:3.8px" width="7" height="7" viewBox="0 0 7 7"><path d="M0.5 0.5L6.2 6.2M6.2 0.5L0.5 6.2" stroke="#222" stroke-width="0.9"/></svg>
<svg style="left:0.8px;top:2.5px" width="11.6" height="10.6" viewBox="0 0 11.6 10.6"><circle cx="2.3" cy="2.1" r="1.7" fill="#3a3432"/><circle cx="9.2" cy="2.1" r="1.7" fill="#2a1a12"/><ellipse cx="5.7" cy="5.6" rx="5.4" ry="4.7" fill="#24140c"/><ellipse cx="3.1" cy="3.3" rx="2.3" ry="1.6" fill="#807870" opacity="0.75"/><ellipse cx="8.9" cy="5.2" rx="1.4" ry="2.1" fill="#6a2408" opacity="0.65"/><ellipse cx="5.4" cy="3.9" rx="0.9" ry="1.3" fill="#000"/><rect x="2.9" y="5.2" width="4.7" height="3.4" rx="1.5" fill="#5566e6"/><rect x="3.9" y="6.2" width="2.7" height="1.3" rx="0.6" fill="#fff"/></svg>
<svg style="left:159.2px;top:241.02999999999997px" width="8" height="8" viewBox="0 0 8 8"><path d="M1.2999999999999998 2.5 L4 5.5 L6.7 2.5" fill="none" stroke="#3c3c3c" stroke-width="1.1"/></svg>
<svg style="left:159.2px;top:352.8299999999999px" width="8" height="8" viewBox="0 0 8 8"><path d="M1.2999999999999998 2.5 L4 5.5 L6.7 2.5" fill="none" stroke="#3c3c3c" stroke-width="1.1"/></svg>
</div></div>
</body></html>
